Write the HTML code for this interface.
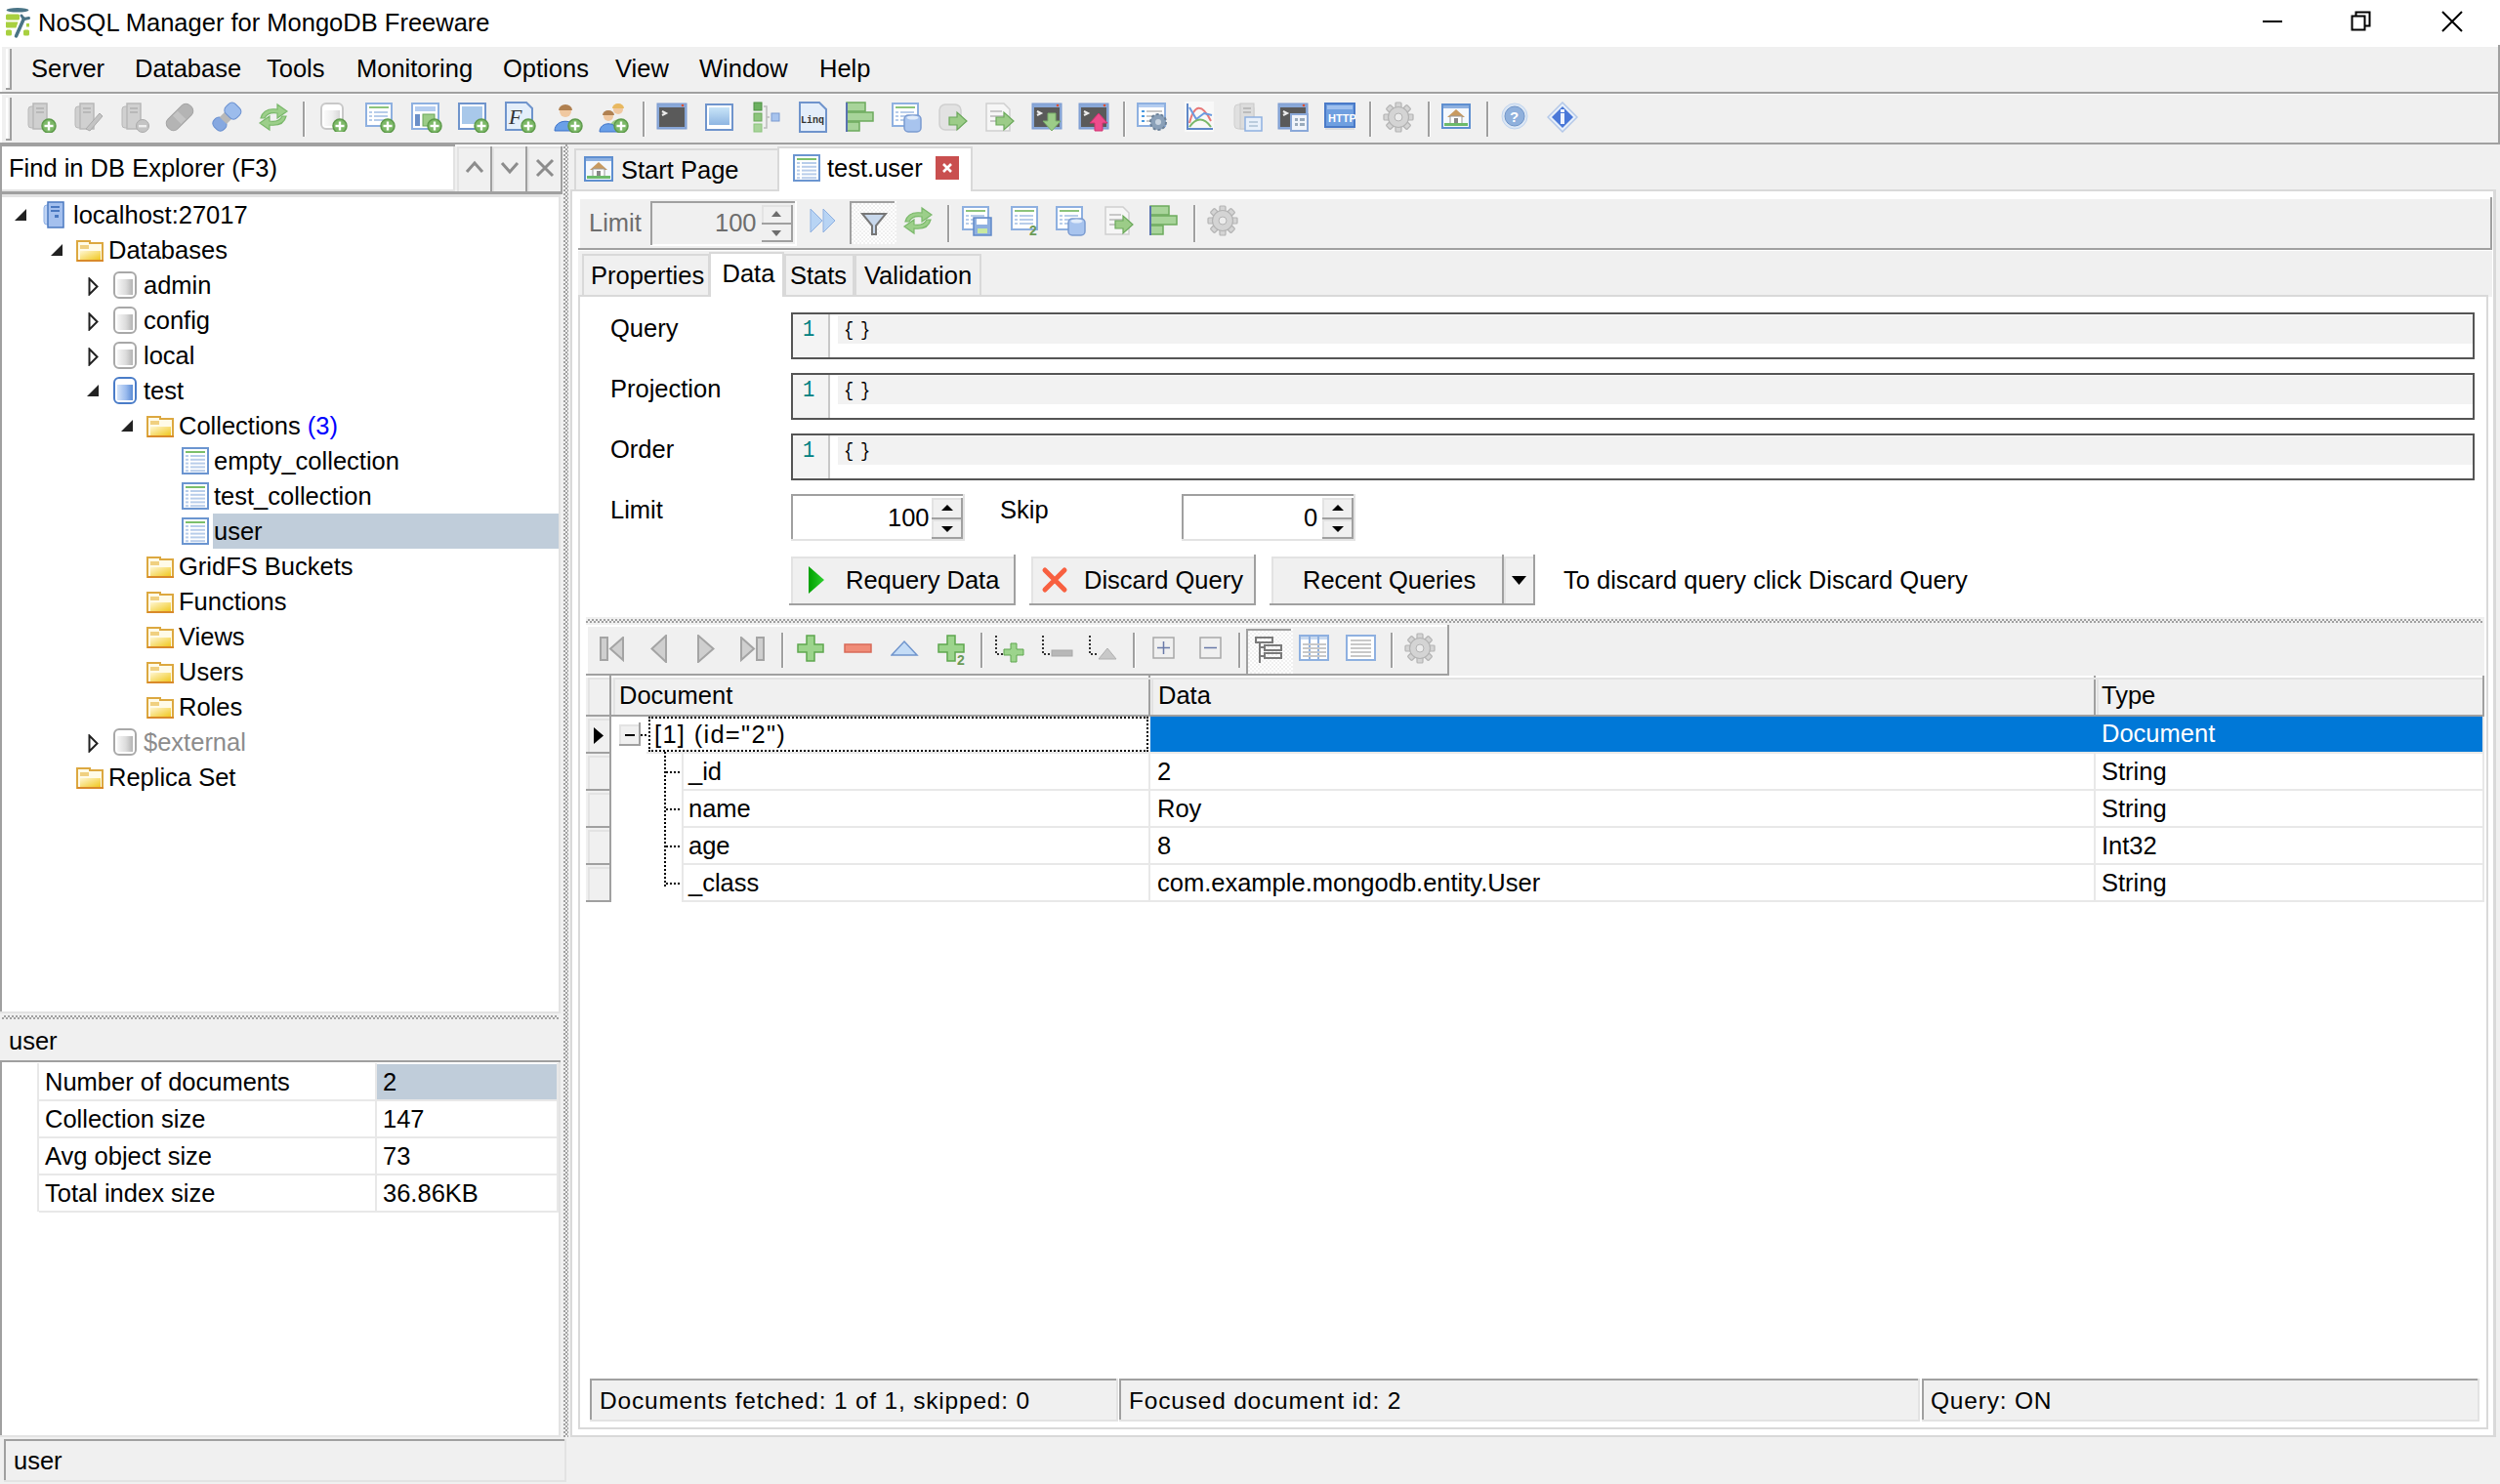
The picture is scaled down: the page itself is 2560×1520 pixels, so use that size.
<!DOCTYPE html>
<html><head><meta charset="utf-8"><style>
html,body{margin:0;padding:0;}
body{width:2560px;height:1520px;position:relative;overflow:hidden;background:#f0f0f0;font-family:'Liberation Sans', sans-serif;}
body>div,body>svg{position:absolute;}
.t{white-space:nowrap;line-height:1;}
</style></head><body>
<div style="left:0px;top:0px;width:2560px;height:48px;background:#fff;"></div>
<svg style="left:0px;top:0px" width="40" height="48" viewBox="0 0 40 48"><ellipse cx="18" cy="10.3" rx="11.5" ry="2.3" fill="#4a7486"/><rect x="6" y="14.5" width="14" height="6" rx="1.5" fill="#a8d040"/><path d="M6 22.5 H18.5 L16.5 28.5 H7 Q6 28.5 6 27.5 Z" fill="#a8d040"/><rect x="6" y="30.5" width="6" height="6" rx="1.5" fill="#a8d040"/><rect x="24" y="30.5" width="6" height="6" rx="1.5" fill="#a8d040"/><rect x="27" y="24" width="3" height="3.5" fill="#a8d040"/><path d="M16.5 37 L24.5 19" stroke="#4a7486" stroke-width="3.5" stroke-linecap="round"/><path d="M22 16 L24.5 19.5 L29.5 18.5" stroke="#4a7486" stroke-width="3" fill="none" stroke-linecap="round"/></svg>
<div class="t" style="left:39.0px;top:11.4px;font-size:25.5px;color:#000;font-family:'Liberation Sans', sans-serif;">NoSQL Manager for MongoDB Freeware</div>
<div style="left:2317px;top:21px;width:20px;height:2px;background:#000;"></div>
<svg style="left:2406px;top:10px" width="24" height="24" viewBox="0 0 24 24"><rect x="2.5" y="6.5" width="13" height="14" fill="none" stroke="#000" stroke-width="2"/><path d="M6.5 6.5 V2.5 H20.5 V16.5 H15.5" fill="none" stroke="#000" stroke-width="2"/></svg>
<svg style="left:2499px;top:10px" width="24" height="24" viewBox="0 0 24 24"><path d="M2 2 L22 22 M22 2 L2 22" stroke="#000" stroke-width="2"/></svg>
<div style="left:0px;top:48px;width:2560px;height:100px;background:#f0f0f0;"></div>
<div style="left:2px;top:48px;width:2556px;height:46px;background:#f0f0f0;"></div>
<div style="left:6px;top:50px;width:2px;height:42px;background:#fff;"></div>
<div style="left:10px;top:50px;width:2px;height:42px;background:#a0a0a0;"></div>
<div style="left:6px;top:90px;width:6px;height:2px;background:#a0a0a0;"></div>
<div class="t" style="left:32.0px;top:58.4px;font-size:25.5px;color:#000;font-family:'Liberation Sans', sans-serif;">Server</div>
<div class="t" style="left:138.0px;top:58.4px;font-size:25.5px;color:#000;font-family:'Liberation Sans', sans-serif;">Database</div>
<div class="t" style="left:273.0px;top:58.4px;font-size:25.5px;color:#000;font-family:'Liberation Sans', sans-serif;">Tools</div>
<div class="t" style="left:365.0px;top:58.4px;font-size:25.5px;color:#000;font-family:'Liberation Sans', sans-serif;">Monitoring</div>
<div class="t" style="left:515.0px;top:58.4px;font-size:25.5px;color:#000;font-family:'Liberation Sans', sans-serif;">Options</div>
<div class="t" style="left:630.0px;top:58.4px;font-size:25.5px;color:#000;font-family:'Liberation Sans', sans-serif;">View</div>
<div class="t" style="left:716.0px;top:58.4px;font-size:25.5px;color:#000;font-family:'Liberation Sans', sans-serif;">Window</div>
<div class="t" style="left:839.0px;top:58.4px;font-size:25.5px;color:#000;font-family:'Liberation Sans', sans-serif;">Help</div>
<div style="left:0px;top:94px;width:2558px;height:2px;background:#a0a0a0;"></div>
<div style="left:0px;top:96px;width:2558px;height:1px;background:#fff;"></div>
<div style="left:2558px;top:46px;width:2px;height:102px;background:#a0a0a0;"></div>
<div style="left:0px;top:48px;width:2px;height:46px;background:#fff;"></div>
<div style="left:0px;top:97px;width:2px;height:49px;background:#fff;"></div>
<div style="left:6px;top:100px;width:2px;height:44px;background:#fff;"></div>
<div style="left:10px;top:100px;width:2px;height:44px;background:#a0a0a0;"></div>
<div style="left:6px;top:142px;width:6px;height:2px;background:#a0a0a0;"></div>
<div style="left:0px;top:146px;width:2560px;height:2px;background:#a0a0a0;"></div>
<svg style="left:26px;top:104px" width="32" height="32" viewBox="0 0 32 32"><rect x="3" y="5" width="8" height="22" rx="3" fill="#d0d0d0" stroke="#b8b8b8"/><rect x="8" y="2" width="14" height="26" fill="#d0d0d0" stroke="#b8b8b8" stroke-width="1.5"/><rect x="11" y="6" width="8" height="2" fill="#b8b8b8"/><rect x="11" y="10" width="8" height="2" fill="#b8b8b8"/><circle cx="24" cy="25" r="7" fill="#7cb867" stroke="#5d9a4a" stroke-width="1.5"/><rect x="19.5" y="23.8" width="9" height="2.4" fill="#fff"/><rect x="22.8" y="20.5" width="2.4" height="9" fill="#fff"/></svg>
<svg style="left:74px;top:104px" width="32" height="32" viewBox="0 0 32 32"><rect x="3" y="5" width="8" height="22" rx="3" fill="#d0d0d0" stroke="#b8b8b8"/><rect x="8" y="2" width="14" height="26" fill="#d0d0d0" stroke="#b8b8b8" stroke-width="1.5"/><rect x="11" y="6" width="8" height="2" fill="#b8b8b8"/><rect x="11" y="10" width="8" height="2" fill="#b8b8b8"/><path d="M14 28 L28 12 L31 15 L18 30 Z" fill="#c4c4c4" stroke="#aaa"/></svg>
<svg style="left:122px;top:104px" width="32" height="32" viewBox="0 0 32 32"><rect x="3" y="5" width="8" height="22" rx="3" fill="#d0d0d0" stroke="#b8b8b8"/><rect x="8" y="2" width="14" height="26" fill="#d0d0d0" stroke="#b8b8b8" stroke-width="1.5"/><rect x="11" y="6" width="8" height="2" fill="#b8b8b8"/><rect x="11" y="10" width="8" height="2" fill="#b8b8b8"/><circle cx="24" cy="25" r="6.5" fill="#c4c4c4" stroke="#aaa"/><rect x="20" y="24" width="8" height="2.4" fill="#eee"/></svg>
<svg style="left:168px;top:104px" width="32" height="32" viewBox="0 0 32 32"><g transform="rotate(-45 16 16)"><rect x="0" y="9" width="32" height="14" rx="6" fill="#b4b4b4" stroke="#a4a4a4"/><rect x="12" y="10" width="7" height="12" fill="#c4c4c4"/></g></svg>
<svg style="left:216px;top:104px" width="32" height="32" viewBox="0 0 32 32"><g transform="rotate(-45 16 16)"><rect x="0" y="9" width="12" height="14" rx="5" fill="#86a8e0" stroke="#6a90d0"/><rect x="11" y="11" width="8" height="10" fill="#b8b8b8"/><rect x="18" y="8" width="14" height="16" rx="5" fill="#9cbcec" stroke="#6a90d0"/></g></svg>
<svg style="left:264px;top:104px" width="32" height="32" viewBox="0 0 32 32"><path d="M3 17 C5 9 12 7 20 8 L20 3 L30 10 L20 17 L20 12 C14 11 9 13 7 17 Z" fill="#9ccf8a" stroke="#7ab86a" stroke-width="1.2"/><path d="M29 15 C27 23 20 25 12 24 L12 29 L2 22 L12 15 L12 20 C18 21 23 19 25 15 Z" fill="#9ccf8a" stroke="#7ab86a" stroke-width="1.2"/></svg>
<div style="left:310px;top:104px;width:2px;height:36px;background:#a0a0a0;"></div>
<div style="left:312px;top:104px;width:1px;height:36px;background:#fff;"></div>
<svg style="left:328px;top:105px" width="30" height="30" viewBox="0 0 30 30"><defs><linearGradient id="dbglight" x1="0" y1="0" x2="1" y2="0"><stop offset="0" stop-color="#fafafa"/><stop offset="0.55" stop-color="#eeeeee"/><stop offset="1" stop-color="#d8d8d8"/></linearGradient></defs><rect x="1" y="1" width="22" height="26" rx="5" fill="#fff" stroke="#c8c8c8" stroke-width="2"/><rect x="4" y="8" width="16" height="16" fill="url(#dbglight)"/><circle cx="20" cy="24" r="7" fill="#7cb867" stroke="#5d9a4a" stroke-width="1.5"/><rect x="15.5" y="22.8" width="9" height="2.4" fill="#fff"/><rect x="18.8" y="19.5" width="2.4" height="9" fill="#fff"/></svg>
<svg style="left:373px;top:104px" width="32" height="32" viewBox="0 0 32 32"><rect x="2" y="2" width="26" height="23" fill="#fff" stroke="#8eb0e0" stroke-width="2"/><rect x="5" y="5" width="20" height="2" fill="#8cc47c"/><rect x="5" y="10" width="3" height="2" fill="#b8cdea"/><rect x="10" y="10" width="14" height="2" fill="#b8cdea"/><rect x="5" y="14" width="3" height="2" fill="#b8cdea"/><rect x="10" y="14" width="14" height="2" fill="#b8cdea"/><rect x="5" y="18" width="3" height="2" fill="#b8cdea"/><rect x="10" y="18" width="14" height="2" fill="#b8cdea"/><circle cx="24" cy="25" r="7" fill="#7cb867" stroke="#5d9a4a" stroke-width="1.5"/><rect x="19.5" y="23.8" width="9" height="2.4" fill="#fff"/><rect x="22.8" y="20.5" width="2.4" height="9" fill="#fff"/></svg>
<svg style="left:421px;top:104px" width="32" height="32" viewBox="0 0 32 32"><rect x="1" y="2" width="27" height="26" fill="#fff" stroke="#8eb0e0" stroke-width="2"/><rect x="4" y="5" width="21" height="5" fill="#b4cdf0"/><rect x="4" y="13" width="5" height="12" fill="#6b8fc8"/><rect x="12" y="13" width="12" height="12" fill="#9ccc88" stroke="#6aa85a"/><circle cx="24" cy="25" r="7" fill="#7cb867" stroke="#5d9a4a" stroke-width="1.5"/><rect x="19.5" y="23.8" width="9" height="2.4" fill="#fff"/><rect x="22.8" y="20.5" width="2.4" height="9" fill="#fff"/></svg>
<svg style="left:469px;top:104px" width="32" height="32" viewBox="0 0 32 32"><rect x="1" y="2" width="27" height="26" fill="#fff" stroke="#6f94cc" stroke-width="2"/><rect x="4" y="5" width="21" height="18" fill="#a8c8ea"/><circle cx="24" cy="25" r="7" fill="#7cb867" stroke="#5d9a4a" stroke-width="1.5"/><rect x="19.5" y="23.8" width="9" height="2.4" fill="#fff"/><rect x="22.8" y="20.5" width="2.4" height="9" fill="#fff"/></svg>
<svg style="left:517px;top:104px" width="32" height="32" viewBox="0 0 32 32"><path d="M1 1 H22 L28 7 V29 H1 Z" fill="#e4eefa" stroke="#6f94cc" stroke-width="2"/><text x="4" y="23" font-family="Liberation Serif" font-style="italic" font-size="22" fill="#333">F</text><circle cx="24" cy="25" r="7" fill="#7cb867" stroke="#5d9a4a" stroke-width="1.5"/><rect x="19.5" y="23.8" width="9" height="2.4" fill="#fff"/><rect x="22.8" y="20.5" width="2.4" height="9" fill="#fff"/></svg>
<svg style="left:565px;top:104px" width="32" height="32" viewBox="0 0 32 32"><circle cx="14" cy="10" r="6" fill="#f0c8a0"/><path d="M14 3 a7 6 0 0 1 7 6 H7 a7 6 0 0 1 7 -6" fill="#b08050"/><path d="M3 30 C3 17 25 17 25 30 Z" fill="#6aa0e8" stroke="#3a70c8"/><circle cx="24" cy="25" r="7" fill="#7cb867" stroke="#5d9a4a" stroke-width="1.5"/><rect x="19.5" y="23.8" width="9" height="2.4" fill="#fff"/><rect x="22.8" y="20.5" width="2.4" height="9" fill="#fff"/></svg>
<svg style="left:612px;top:104px" width="32" height="32" viewBox="0 0 32 32"><circle cx="21" cy="8" r="5" fill="#f0c8a0"/><path d="M21 2 a6 5 0 0 1 6 5 H15 a6 5 0 0 1 6 -5" fill="#e8b860"/><path d="M13 26 C13 16 29 16 29 26 Z" fill="#9ccc88"/><circle cx="11" cy="15" r="5" fill="#f0c8a0"/><path d="M11 9 a6 5 0 0 1 6 5 H5 a6 5 0 0 1 6 -5" fill="#b08050"/><path d="M2 31 C2 20 20 20 20 31 Z" fill="#6aa0e8" stroke="#3a70c8"/><circle cx="24" cy="25" r="7" fill="#7cb867" stroke="#5d9a4a" stroke-width="1.5"/><rect x="19.5" y="23.8" width="9" height="2.4" fill="#fff"/><rect x="22.8" y="20.5" width="2.4" height="9" fill="#fff"/></svg>
<div style="left:658px;top:104px;width:2px;height:36px;background:#a0a0a0;"></div>
<div style="left:660px;top:104px;width:1px;height:36px;background:#fff;"></div>
<svg style="left:672px;top:104px" width="32" height="32" viewBox="0 0 32 32"><rect x="1" y="2" width="30" height="26" fill="#8aa8d8" stroke="#7a9ad0"/><rect x="3" y="6" width="26" height="20" fill="#5a5a5a"/><circle cx="27" cy="4" r="1.3" fill="#e05030"/><path d="M6 10 L10 12 L6 14" stroke="#eee" stroke-width="2" fill="none"/></svg>
<svg style="left:722px;top:105px" width="30" height="30" viewBox="0 0 30 30"><rect x="1" y="2" width="27" height="26" fill="#fff" stroke="#6f94cc" stroke-width="2"/><defs><linearGradient id="wg" x1="0" y1="0" x2="0" y2="1"><stop offset="0" stop-color="#c8e4f8"/><stop offset="1" stop-color="#8fb6e2"/></linearGradient></defs><rect x="4" y="5" width="21" height="18" fill="url(#wg)"/></svg>
<svg style="left:771px;top:104px" width="30" height="32" viewBox="0 0 30 32"><rect x="1" y="1" width="8" height="8" fill="#6cb060" stroke="#4a9040"/><rect x="1" y="12" width="8" height="8" fill="#8cc47c" stroke="#6aa85a"/><rect x="1" y="23" width="8" height="8" fill="#a8d49a" stroke="#8cc47c"/><path d="M11 5 H14 V27 H11 M14 16 H17" stroke="#bbb" stroke-width="1.5" fill="none"/><rect x="19" y="12" width="8" height="8" fill="#a8c4ee" stroke="#7a9ad0"/></svg>
<svg style="left:818px;top:104px" width="30" height="32" viewBox="0 0 30 32"><path d="M1 1 H21 L28 8 V31 H1 Z" fill="#e4eefa" stroke="#6f94cc" stroke-width="2"/><text x="2" y="22" font-family="Liberation Mono" font-weight="bold" font-size="10" fill="#333">Linq</text></svg>
<svg style="left:866px;top:104px" width="30" height="32" viewBox="0 0 30 32"><rect x="1" y="1" width="19" height="9" fill="#a8d49a" stroke="#6caa5c" stroke-width="1.5"/><rect x="1" y="11" width="27" height="9" fill="#a8d49a" stroke="#6caa5c" stroke-width="1.5"/><rect x="1" y="21" width="13" height="9" fill="#a8d49a" stroke="#6caa5c" stroke-width="1.5"/><rect x="0" y="1" width="2" height="30" fill="#5a72b0"/></svg>
<svg style="left:912px;top:104px" width="32" height="32" viewBox="0 0 32 32"><rect x="2" y="2" width="26" height="23" fill="#fff" stroke="#8eb0e0" stroke-width="2"/><rect x="5" y="5" width="20" height="2" fill="#8cc47c"/><rect x="5" y="10" width="3" height="2" fill="#b8cdea"/><rect x="10" y="10" width="14" height="2" fill="#b8cdea"/><rect x="5" y="14" width="3" height="2" fill="#b8cdea"/><rect x="10" y="14" width="14" height="2" fill="#b8cdea"/><rect x="5" y="18" width="3" height="2" fill="#b8cdea"/><rect x="10" y="18" width="14" height="2" fill="#b8cdea"/><rect x="14" y="14" width="17" height="17" rx="4" fill="#a8c4ee" stroke="#7a9ad0" stroke-width="1.5"/><ellipse cx="22.5" cy="16.5" rx="6" ry="2" fill="#e0ebfa"/></svg>
<svg style="left:960px;top:104px" width="32" height="32" viewBox="0 0 32 32"><rect x="2" y="3" width="22" height="26" rx="6" fill="#e2e2e2" stroke="#cfcfcf" stroke-width="1.5"/><path d="M12 16 H20 V11 L30 20 L20 29 V24 H12 Z" fill="#9ccc88" stroke="#6aa85a" stroke-width="1.2"/></svg>
<svg style="left:1008px;top:104px" width="32" height="32" viewBox="0 0 32 32"><path d="M2 2 H20 L26 8 V30 H2 Z" fill="#f6f6f6" stroke="#d0d0d0" stroke-width="1.5"/><rect x="6" y="9" width="12" height="2" fill="#c8c8c8"/><rect x="6" y="14" width="14" height="2" fill="#c8c8c8"/><rect x="6" y="19" width="10" height="2" fill="#c8c8c8"/><path d="M12 16 H20 V11 L30 20 L20 29 V24 H12 Z" fill="#9ccc88" stroke="#6aa85a" stroke-width="1.2"/></svg>
<svg style="left:1056px;top:104px" width="32" height="32" viewBox="0 0 32 32"><rect x="1" y="2" width="30" height="26" fill="#8aa8d8" stroke="#7a9ad0"/><rect x="3" y="6" width="26" height="20" fill="#5a5a5a"/><circle cx="27" cy="4" r="1.3" fill="#e05030"/><path d="M6 10 L10 12 L6 14" stroke="#eee" stroke-width="2" fill="none"/><path d="M17 12 H25 V20 H30 L21 30 L12 20 H17 Z" fill="#9ccc88" stroke="#7ab06a"/></svg>
<svg style="left:1104px;top:104px" width="32" height="32" viewBox="0 0 32 32"><rect x="1" y="2" width="30" height="26" fill="#8aa8d8" stroke="#7a9ad0"/><rect x="3" y="6" width="26" height="20" fill="#5a5a5a"/><circle cx="27" cy="4" r="1.3" fill="#e05030"/><path d="M6 10 L10 12 L6 14" stroke="#eee" stroke-width="2" fill="none"/><path d="M21 12 L30 22 H25 V30 H17 V22 H12 Z" fill="#ee4c8c" stroke="#d03070"/></svg>
<div style="left:1150px;top:104px;width:2px;height:36px;background:#a0a0a0;"></div>
<div style="left:1152px;top:104px;width:1px;height:36px;background:#fff;"></div>
<svg style="left:1164px;top:104px" width="32" height="32" viewBox="0 0 32 32"><rect x="1" y="2" width="28" height="23" fill="#fff" stroke="#8eb0e0" stroke-width="2"/><rect x="2" y="3" width="26" height="3" fill="#b4cdf0"/><rect x="5" y="9" width="3" height="2" fill="#4a9ae0"/><rect x="10" y="9" width="16" height="2" fill="#c8c8c8"/><rect x="5" y="14" width="3" height="2" fill="#4a9ae0"/><rect x="10" y="14" width="10" height="2" fill="#c8c8c8"/><rect x="5" y="19" width="3" height="2" fill="#4a9ae0"/><rect x="10" y="19" width="8" height="2" fill="#c8c8c8"/><circle cx="22" cy="21" r="8" fill="#8aa0b8" stroke="#6a8098" stroke-width="2" stroke-dasharray="3 2"/><circle cx="22" cy="21" r="3" fill="#c8d4e0"/></svg>
<svg style="left:1213px;top:104px" width="30" height="32" viewBox="0 0 30 32"><rect x="0" y="0" width="30" height="31" fill="#f8f8f8"/><path d="M3 2 V28 H29" stroke="#5f88c8" stroke-width="2" fill="none"/><path d="M5 22 C10 2 18 2 27 20" stroke="#e87878" stroke-width="2" fill="none"/><path d="M5 6 L12 18 L20 12 L28 14" stroke="#6a9ae0" stroke-width="2" fill="none"/><path d="M5 26 C12 16 20 16 27 26" stroke="#7ab86a" stroke-width="2" fill="none"/></svg>
<svg style="left:1262px;top:104px" width="32" height="32" viewBox="0 0 32 32"><rect x="2" y="3" width="20" height="25" rx="4" fill="#e0e0e0" stroke="#cfcfcf"/><rect x="8" y="2" width="14" height="26" fill="#dcdcdc" stroke="#c8c8c8"/><rect x="11" y="6" width="8" height="2" fill="#bbb"/><rect x="11" y="10" width="8" height="2" fill="#bbb"/><rect x="13" y="16" width="17" height="14" fill="#e8f0fa" stroke="#8eb0e0" stroke-width="1.5"/><rect x="17" y="20" width="9" height="2" fill="#bcd"/><rect x="17" y="24" width="9" height="2" fill="#bcd"/></svg>
<svg style="left:1308px;top:104px" width="32" height="32" viewBox="0 0 32 32"><rect x="1" y="2" width="30" height="26" fill="#8aa8d8" stroke="#7a9ad0"/><rect x="3" y="6" width="26" height="20" fill="#5a5a5a"/><circle cx="27" cy="4" r="1.3" fill="#e05030"/><path d="M6 10 L10 12 L6 14" stroke="#eee" stroke-width="2" fill="none"/><rect x="14" y="13" width="17" height="17" fill="#f0f4fa" stroke="#8aa8d8" stroke-width="2"/><rect x="18" y="17" width="3" height="3" fill="#9ab"/><rect x="23" y="17" width="5" height="3" fill="#9ab"/><rect x="18" y="22" width="3" height="3" fill="#9ab"/><rect x="23" y="22" width="5" height="3" fill="#9ab"/></svg>
<svg style="left:1356px;top:105px" width="32" height="30" viewBox="0 0 32 30"><rect x="1" y="1" width="30" height="24" fill="#6f9fe0" stroke="#4a7ac8" stroke-width="2"/><rect x="3" y="3" width="26" height="4" fill="#9fc0ee"/><text x="4" y="20" font-family="Liberation Sans" font-weight="bold" font-size="11" fill="#fff">HTTP</text><rect x="1" y="26" width="30" height="2" fill="#ddd"/></svg>
<div style="left:1402px;top:104px;width:2px;height:36px;background:#a0a0a0;"></div>
<div style="left:1404px;top:104px;width:1px;height:36px;background:#fff;"></div>
<svg style="left:1416px;top:104px" width="32" height="32" viewBox="0 0 32 32"><rect x="13" y="1" width="6" height="8" rx="1" fill="#d4d4d4" stroke="#b4b4b4" stroke-width="1.2" transform="rotate(0 16 16)"/><rect x="13" y="1" width="6" height="8" rx="1" fill="#d4d4d4" stroke="#b4b4b4" stroke-width="1.2" transform="rotate(45 16 16)"/><rect x="13" y="1" width="6" height="8" rx="1" fill="#d4d4d4" stroke="#b4b4b4" stroke-width="1.2" transform="rotate(90 16 16)"/><rect x="13" y="1" width="6" height="8" rx="1" fill="#d4d4d4" stroke="#b4b4b4" stroke-width="1.2" transform="rotate(135 16 16)"/><rect x="13" y="1" width="6" height="8" rx="1" fill="#d4d4d4" stroke="#b4b4b4" stroke-width="1.2" transform="rotate(180 16 16)"/><rect x="13" y="1" width="6" height="8" rx="1" fill="#d4d4d4" stroke="#b4b4b4" stroke-width="1.2" transform="rotate(225 16 16)"/><rect x="13" y="1" width="6" height="8" rx="1" fill="#d4d4d4" stroke="#b4b4b4" stroke-width="1.2" transform="rotate(270 16 16)"/><rect x="13" y="1" width="6" height="8" rx="1" fill="#d4d4d4" stroke="#b4b4b4" stroke-width="1.2" transform="rotate(315 16 16)"/><circle cx="16" cy="16" r="10.5" fill="#d4d4d4" stroke="#b4b4b4" stroke-width="1.2"/><circle cx="16" cy="16" r="4" fill="#ececec" stroke="#b4b4b4"/></svg>
<div style="left:1462px;top:104px;width:2px;height:36px;background:#a0a0a0;"></div>
<div style="left:1464px;top:104px;width:1px;height:36px;background:#fff;"></div>
<svg style="left:1476px;top:106px" width="30" height="26" viewBox="0 0 30 26"><rect x="1" y="1" width="28" height="24" fill="#f4f8fd" stroke="#5f8fd0" stroke-width="2"/><rect x="2" y="2" width="26" height="3" fill="#8db0e0"/><path d="M6 14 L15 6 L24 14 Z" fill="#c89a60"/><rect x="9" y="13" width="12" height="8" fill="#fff" stroke="#999"/><rect x="13" y="15" width="4" height="6" fill="#888"/><rect x="3" y="20" width="24" height="3" fill="#6cba6a"/></svg>
<div style="left:1522px;top:104px;width:2px;height:36px;background:#a0a0a0;"></div>
<div style="left:1524px;top:104px;width:1px;height:36px;background:#fff;"></div>
<svg style="left:1537px;top:105px" width="30" height="30" viewBox="0 0 30 30"><circle cx="14" cy="14" r="13" fill="#dbe6f4" stroke="#c0d4ee"/><circle cx="14" cy="14" r="10" fill="#8fb0dc" stroke="#6f94c8"/><text x="9" y="20" font-family="Liberation Sans" font-weight="bold" font-size="15" fill="#fff">?</text></svg>
<svg style="left:1584px;top:104px" width="32" height="32" viewBox="0 0 32 32"><path d="M16 1 L31 16 L16 31 L1 16 Z" fill="#e8f0fa" stroke="#b4c8e8" stroke-width="1.5"/><path d="M16 5 L27 16 L16 27 L5 16 Z" fill="#4a78d8"/><rect x="14" y="12" width="4" height="11" fill="#f0f4ff"/><rect x="14" y="8" width="4" height="3" fill="#f0f4ff"/></svg>
<div style="left:0px;top:148px;width:580px;height:1372px;background:#f0f0f0;"></div>
<div style="left:0px;top:148px;width:466px;height:48px;background:#fff;"></div>
<div style="left:0px;top:148px;width:466px;height:2px;background:#a0a0a0;"></div>
<div style="left:0px;top:148px;width:2px;height:50px;background:#a0a0a0;"></div>
<div style="left:2px;top:150px;width:464px;height:2px;background:#fff;"></div>
<div style="left:464px;top:150px;width:2px;height:46px;background:#e3e3e3;"></div>
<div style="left:2px;top:194px;width:464px;height:2px;background:#e3e3e3;"></div>
<div class="t" style="left:9.0px;top:159.9px;font-size:25.5px;color:#000;font-family:'Liberation Sans', sans-serif;">Find in DB Explorer (F3)</div>
<div style="left:466px;top:148px;width:36px;height:2px;background:#fff;"></div>
<div style="left:468px;top:150px;width:34px;height:46px;background:#f0f0f0;"></div>
<div style="left:468px;top:150px;width:34px;height:2px;background:#e3e3e3;"></div>
<div style="left:468px;top:150px;width:2px;height:46px;background:#e3e3e3;"></div>
<div style="left:502px;top:150px;width:2px;height:46px;background:#a0a0a0;"></div>
<div style="left:502px;top:148px;width:36px;height:2px;background:#fff;"></div>
<div style="left:504px;top:150px;width:34px;height:46px;background:#f0f0f0;"></div>
<div style="left:504px;top:150px;width:34px;height:2px;background:#e3e3e3;"></div>
<div style="left:504px;top:150px;width:2px;height:46px;background:#e3e3e3;"></div>
<div style="left:538px;top:150px;width:2px;height:46px;background:#a0a0a0;"></div>
<div style="left:538px;top:148px;width:36px;height:2px;background:#fff;"></div>
<div style="left:540px;top:150px;width:34px;height:46px;background:#f0f0f0;"></div>
<div style="left:540px;top:150px;width:34px;height:2px;background:#e3e3e3;"></div>
<div style="left:540px;top:150px;width:2px;height:46px;background:#e3e3e3;"></div>
<div style="left:574px;top:150px;width:2px;height:46px;background:#a0a0a0;"></div>
<svg style="left:476px;top:164px" width="20" height="15" viewBox="0 0 20 15"><path d="M2 12 L10 3 L18 12" stroke="#8c8c8c" stroke-width="3" fill="none"/></svg>
<svg style="left:512px;top:164px" width="20" height="15" viewBox="0 0 20 15"><path d="M2 3 L10 12 L18 3" stroke="#8c8c8c" stroke-width="3" fill="none"/></svg>
<svg style="left:548px;top:162px" width="20" height="20" viewBox="0 0 20 20"><path d="M2 2 L18 18 M18 2 L2 18" stroke="#8c8c8c" stroke-width="3"/></svg>
<div style="left:0px;top:196px;width:576px;height:3px;background:#a0a0a0;"></div>
<div style="left:0px;top:199px;width:574px;height:839px;background:#fff;"></div>
<div style="left:0px;top:199px;width:2px;height:839px;background:#a0a0a0;"></div>
<div style="left:2px;top:199px;width:570px;height:3px;background:#e3e3e3;"></div>
<div style="left:572px;top:199px;width:2px;height:839px;background:#e3e3e3;"></div>
<div style="left:0px;top:1036px;width:574px;height:2px;background:#e3e3e3;"></div>
<svg style="left:15px;top:214px" width="12" height="12" viewBox="0 0 12 12"><path d="M12 0 V12 H0 Z" fill="#222"/></svg>
<svg style="left:44px;top:206px" width="22" height="28" viewBox="0 0 22 28"><rect x="1" y="4" width="10" height="20" rx="3" fill="#c0d4f4" stroke="#8fb0e4"/><rect x="5" y="1" width="16" height="26" fill="#a4c0ee" stroke="#4a78c0" stroke-width="1.5"/><rect x="8" y="5" width="9" height="2" fill="#4a78c0"/><rect x="8" y="9" width="9" height="2" fill="#4a78c0"/><rect x="12" y="14" width="4" height="3" fill="#4a78c0"/></svg>
<div class="t" style="left:75.0px;top:208.4px;font-size:25.5px;color:#000;font-family:'Liberation Sans', sans-serif;">localhost:27017</div>
<svg style="left:52px;top:250px" width="12" height="12" viewBox="0 0 12 12"><path d="M12 0 V12 H0 Z" fill="#222"/></svg>
<svg style="left:78px;top:246px" width="28" height="22" viewBox="0 0 28 22"><defs><linearGradient id="fg" x1="0" y1="0" x2="1" y2="1"><stop offset="0" stop-color="#fff6d0"/><stop offset="1" stop-color="#f0c820"/></linearGradient></defs><path d="M1 1 H14 V3 H27 V21 H1 Z" fill="#fffbe8" stroke="#dca840" stroke-width="2"/><rect x="4" y="5" width="9" height="4" fill="#f0d080"/><rect x="4" y="11" width="21" height="9" fill="url(#fg)"/><rect x="1" y="20" width="27" height="2" fill="#d98a2a"/></svg>
<div class="t" style="left:111.0px;top:244.4px;font-size:25.5px;color:#000;font-family:'Liberation Sans', sans-serif;">Databases</div>
<svg style="left:90px;top:284px" width="11" height="19" viewBox="0 0 11 19"><path d="M1.5 1.5 L9.5 9.5 L1.5 17.5 Z" fill="#fff" stroke="#222" stroke-width="2"/></svg>
<svg style="left:116px;top:278px" width="24" height="28" viewBox="0 0 24 28"><defs><linearGradient id="dbggray" x1="0" y1="0" x2="1" y2="0"><stop offset="0" stop-color="#f6f6f6"/><stop offset="0.55" stop-color="#dcdcdc"/><stop offset="1" stop-color="#b4b4b4"/></linearGradient></defs><rect x="1" y="1" width="22" height="26" rx="5" fill="#fff" stroke="#a8a8a8" stroke-width="2"/><rect x="4" y="8" width="16" height="16" fill="url(#dbggray)"/></svg>
<div class="t" style="left:147.0px;top:280.4px;font-size:25.5px;color:#000;font-family:'Liberation Sans', sans-serif;">admin</div>
<svg style="left:90px;top:320px" width="11" height="19" viewBox="0 0 11 19"><path d="M1.5 1.5 L9.5 9.5 L1.5 17.5 Z" fill="#fff" stroke="#222" stroke-width="2"/></svg>
<svg style="left:116px;top:314px" width="24" height="28" viewBox="0 0 24 28"><defs><linearGradient id="dbggray" x1="0" y1="0" x2="1" y2="0"><stop offset="0" stop-color="#f6f6f6"/><stop offset="0.55" stop-color="#dcdcdc"/><stop offset="1" stop-color="#b4b4b4"/></linearGradient></defs><rect x="1" y="1" width="22" height="26" rx="5" fill="#fff" stroke="#a8a8a8" stroke-width="2"/><rect x="4" y="8" width="16" height="16" fill="url(#dbggray)"/></svg>
<div class="t" style="left:147.0px;top:316.4px;font-size:25.5px;color:#000;font-family:'Liberation Sans', sans-serif;">config</div>
<svg style="left:90px;top:356px" width="11" height="19" viewBox="0 0 11 19"><path d="M1.5 1.5 L9.5 9.5 L1.5 17.5 Z" fill="#fff" stroke="#222" stroke-width="2"/></svg>
<svg style="left:116px;top:350px" width="24" height="28" viewBox="0 0 24 28"><defs><linearGradient id="dbggray" x1="0" y1="0" x2="1" y2="0"><stop offset="0" stop-color="#f6f6f6"/><stop offset="0.55" stop-color="#dcdcdc"/><stop offset="1" stop-color="#b4b4b4"/></linearGradient></defs><rect x="1" y="1" width="22" height="26" rx="5" fill="#fff" stroke="#a8a8a8" stroke-width="2"/><rect x="4" y="8" width="16" height="16" fill="url(#dbggray)"/></svg>
<div class="t" style="left:147.0px;top:352.4px;font-size:25.5px;color:#000;font-family:'Liberation Sans', sans-serif;">local</div>
<svg style="left:89px;top:394px" width="12" height="12" viewBox="0 0 12 12"><path d="M12 0 V12 H0 Z" fill="#222"/></svg>
<svg style="left:116px;top:386px" width="24" height="28" viewBox="0 0 24 28"><defs><linearGradient id="dbgblue" x1="0" y1="0" x2="1" y2="0"><stop offset="0" stop-color="#d4e4fa"/><stop offset="0.55" stop-color="#9cbcee"/><stop offset="1" stop-color="#5c8cd4"/></linearGradient></defs><rect x="1" y="1" width="22" height="26" rx="5" fill="#fff" stroke="#4a7cc8" stroke-width="2"/><rect x="4" y="8" width="16" height="16" fill="url(#dbgblue)"/></svg>
<div class="t" style="left:147.0px;top:388.4px;font-size:25.5px;color:#000;font-family:'Liberation Sans', sans-serif;">test</div>
<svg style="left:124px;top:430px" width="12" height="12" viewBox="0 0 12 12"><path d="M12 0 V12 H0 Z" fill="#222"/></svg>
<svg style="left:150px;top:426px" width="28" height="22" viewBox="0 0 28 22"><defs><linearGradient id="fg" x1="0" y1="0" x2="1" y2="1"><stop offset="0" stop-color="#fff6d0"/><stop offset="1" stop-color="#f0c820"/></linearGradient></defs><path d="M1 1 H14 V3 H27 V21 H1 Z" fill="#fffbe8" stroke="#dca840" stroke-width="2"/><rect x="4" y="5" width="9" height="4" fill="#f0d080"/><rect x="4" y="11" width="21" height="9" fill="url(#fg)"/><rect x="1" y="20" width="27" height="2" fill="#d98a2a"/></svg>
<div class="t" style="left:183.0px;top:424.4px;font-size:25.5px;color:#000;font-family:'Liberation Sans', sans-serif;">Collections <span style="color:#0000ff">(3)</span></div>
<svg style="left:186px;top:458px" width="28" height="28" viewBox="0 0 28 28"><rect x="1" y="1" width="26" height="26" fill="#fff" stroke="#6b95d0" stroke-width="2"/><rect x="4" y="4" width="20" height="2" fill="#7cbf6a"/><rect x="4" y="8.0" width="3" height="2" fill="#b8cdea"/><rect x="9" y="8.0" width="15" height="2" fill="#b8cdea"/><rect x="4" y="11.8" width="3" height="2" fill="#b8cdea"/><rect x="9" y="11.8" width="15" height="2" fill="#b8cdea"/><rect x="4" y="15.6" width="3" height="2" fill="#b8cdea"/><rect x="9" y="15.6" width="15" height="2" fill="#b8cdea"/><rect x="4" y="19.4" width="3" height="2" fill="#b8cdea"/><rect x="9" y="19.4" width="15" height="2" fill="#b8cdea"/><rect x="4" y="23.2" width="3" height="2" fill="#b8cdea"/><rect x="9" y="23.2" width="15" height="2" fill="#b8cdea"/></svg>
<div class="t" style="left:219.0px;top:460.4px;font-size:25.5px;color:#000;font-family:'Liberation Sans', sans-serif;">empty_collection</div>
<svg style="left:186px;top:494px" width="28" height="28" viewBox="0 0 28 28"><rect x="1" y="1" width="26" height="26" fill="#fff" stroke="#6b95d0" stroke-width="2"/><rect x="4" y="4" width="20" height="2" fill="#7cbf6a"/><rect x="4" y="8.0" width="3" height="2" fill="#b8cdea"/><rect x="9" y="8.0" width="15" height="2" fill="#b8cdea"/><rect x="4" y="11.8" width="3" height="2" fill="#b8cdea"/><rect x="9" y="11.8" width="15" height="2" fill="#b8cdea"/><rect x="4" y="15.6" width="3" height="2" fill="#b8cdea"/><rect x="9" y="15.6" width="15" height="2" fill="#b8cdea"/><rect x="4" y="19.4" width="3" height="2" fill="#b8cdea"/><rect x="9" y="19.4" width="15" height="2" fill="#b8cdea"/><rect x="4" y="23.2" width="3" height="2" fill="#b8cdea"/><rect x="9" y="23.2" width="15" height="2" fill="#b8cdea"/></svg>
<div class="t" style="left:219.0px;top:496.4px;font-size:25.5px;color:#000;font-family:'Liberation Sans', sans-serif;">test_collection</div>
<div style="left:218px;top:526px;width:354px;height:36px;background:#c0cdda;"></div>
<svg style="left:186px;top:530px" width="28" height="28" viewBox="0 0 28 28"><rect x="1" y="1" width="26" height="26" fill="#fff" stroke="#6b95d0" stroke-width="2"/><rect x="4" y="4" width="20" height="2" fill="#7cbf6a"/><rect x="4" y="8.0" width="3" height="2" fill="#b8cdea"/><rect x="9" y="8.0" width="15" height="2" fill="#b8cdea"/><rect x="4" y="11.8" width="3" height="2" fill="#b8cdea"/><rect x="9" y="11.8" width="15" height="2" fill="#b8cdea"/><rect x="4" y="15.6" width="3" height="2" fill="#b8cdea"/><rect x="9" y="15.6" width="15" height="2" fill="#b8cdea"/><rect x="4" y="19.4" width="3" height="2" fill="#b8cdea"/><rect x="9" y="19.4" width="15" height="2" fill="#b8cdea"/><rect x="4" y="23.2" width="3" height="2" fill="#b8cdea"/><rect x="9" y="23.2" width="15" height="2" fill="#b8cdea"/></svg>
<div class="t" style="left:219.0px;top:532.4px;font-size:25.5px;color:#000;font-family:'Liberation Sans', sans-serif;">user</div>
<svg style="left:150px;top:570px" width="28" height="22" viewBox="0 0 28 22"><defs><linearGradient id="fg" x1="0" y1="0" x2="1" y2="1"><stop offset="0" stop-color="#fff6d0"/><stop offset="1" stop-color="#f0c820"/></linearGradient></defs><path d="M1 1 H14 V3 H27 V21 H1 Z" fill="#fffbe8" stroke="#dca840" stroke-width="2"/><rect x="4" y="5" width="9" height="4" fill="#f0d080"/><rect x="4" y="11" width="21" height="9" fill="url(#fg)"/><rect x="1" y="20" width="27" height="2" fill="#d98a2a"/></svg>
<div class="t" style="left:183.0px;top:568.4px;font-size:25.5px;color:#000;font-family:'Liberation Sans', sans-serif;">GridFS Buckets</div>
<svg style="left:150px;top:606px" width="28" height="22" viewBox="0 0 28 22"><defs><linearGradient id="fg" x1="0" y1="0" x2="1" y2="1"><stop offset="0" stop-color="#fff6d0"/><stop offset="1" stop-color="#f0c820"/></linearGradient></defs><path d="M1 1 H14 V3 H27 V21 H1 Z" fill="#fffbe8" stroke="#dca840" stroke-width="2"/><rect x="4" y="5" width="9" height="4" fill="#f0d080"/><rect x="4" y="11" width="21" height="9" fill="url(#fg)"/><rect x="1" y="20" width="27" height="2" fill="#d98a2a"/></svg>
<div class="t" style="left:183.0px;top:604.4px;font-size:25.5px;color:#000;font-family:'Liberation Sans', sans-serif;">Functions</div>
<svg style="left:150px;top:642px" width="28" height="22" viewBox="0 0 28 22"><defs><linearGradient id="fg" x1="0" y1="0" x2="1" y2="1"><stop offset="0" stop-color="#fff6d0"/><stop offset="1" stop-color="#f0c820"/></linearGradient></defs><path d="M1 1 H14 V3 H27 V21 H1 Z" fill="#fffbe8" stroke="#dca840" stroke-width="2"/><rect x="4" y="5" width="9" height="4" fill="#f0d080"/><rect x="4" y="11" width="21" height="9" fill="url(#fg)"/><rect x="1" y="20" width="27" height="2" fill="#d98a2a"/></svg>
<div class="t" style="left:183.0px;top:640.4px;font-size:25.5px;color:#000;font-family:'Liberation Sans', sans-serif;">Views</div>
<svg style="left:150px;top:678px" width="28" height="22" viewBox="0 0 28 22"><defs><linearGradient id="fg" x1="0" y1="0" x2="1" y2="1"><stop offset="0" stop-color="#fff6d0"/><stop offset="1" stop-color="#f0c820"/></linearGradient></defs><path d="M1 1 H14 V3 H27 V21 H1 Z" fill="#fffbe8" stroke="#dca840" stroke-width="2"/><rect x="4" y="5" width="9" height="4" fill="#f0d080"/><rect x="4" y="11" width="21" height="9" fill="url(#fg)"/><rect x="1" y="20" width="27" height="2" fill="#d98a2a"/></svg>
<div class="t" style="left:183.0px;top:676.4px;font-size:25.5px;color:#000;font-family:'Liberation Sans', sans-serif;">Users</div>
<svg style="left:150px;top:714px" width="28" height="22" viewBox="0 0 28 22"><defs><linearGradient id="fg" x1="0" y1="0" x2="1" y2="1"><stop offset="0" stop-color="#fff6d0"/><stop offset="1" stop-color="#f0c820"/></linearGradient></defs><path d="M1 1 H14 V3 H27 V21 H1 Z" fill="#fffbe8" stroke="#dca840" stroke-width="2"/><rect x="4" y="5" width="9" height="4" fill="#f0d080"/><rect x="4" y="11" width="21" height="9" fill="url(#fg)"/><rect x="1" y="20" width="27" height="2" fill="#d98a2a"/></svg>
<div class="t" style="left:183.0px;top:712.4px;font-size:25.5px;color:#000;font-family:'Liberation Sans', sans-serif;">Roles</div>
<svg style="left:90px;top:752px" width="11" height="19" viewBox="0 0 11 19"><path d="M1.5 1.5 L9.5 9.5 L1.5 17.5 Z" fill="#fff" stroke="#222" stroke-width="2"/></svg>
<svg style="left:116px;top:746px" width="24" height="28" viewBox="0 0 24 28"><defs><linearGradient id="dbggray" x1="0" y1="0" x2="1" y2="0"><stop offset="0" stop-color="#f6f6f6"/><stop offset="0.55" stop-color="#dcdcdc"/><stop offset="1" stop-color="#b4b4b4"/></linearGradient></defs><rect x="1" y="1" width="22" height="26" rx="5" fill="#fff" stroke="#a8a8a8" stroke-width="2"/><rect x="4" y="8" width="16" height="16" fill="url(#dbggray)"/></svg>
<div class="t" style="left:147.0px;top:748.4px;font-size:25.5px;color:#000;font-family:'Liberation Sans', sans-serif;"><span style="color:#8c8c8c">$external</span></div>
<svg style="left:78px;top:786px" width="28" height="22" viewBox="0 0 28 22"><defs><linearGradient id="fg" x1="0" y1="0" x2="1" y2="1"><stop offset="0" stop-color="#fff6d0"/><stop offset="1" stop-color="#f0c820"/></linearGradient></defs><path d="M1 1 H14 V3 H27 V21 H1 Z" fill="#fffbe8" stroke="#dca840" stroke-width="2"/><rect x="4" y="5" width="9" height="4" fill="#f0d080"/><rect x="4" y="11" width="21" height="9" fill="url(#fg)"/><rect x="1" y="20" width="27" height="2" fill="#d98a2a"/></svg>
<div class="t" style="left:111.0px;top:784.4px;font-size:25.5px;color:#000;font-family:'Liberation Sans', sans-serif;">Replica Set</div>
<div style="left:2px;top:1040px;width:570px;height:4px;background-image:repeating-conic-gradient(#a0a0a0 0 25%, #f0f0f0 0 50%);background-size:4px 4px;"></div>
<div class="t" style="left:9.0px;top:1054.4px;font-size:25.5px;color:#000;font-family:'Liberation Sans', sans-serif;">user</div>
<div style="left:0px;top:1086px;width:574px;height:2px;background:#a0a0a0;"></div>
<div style="left:0px;top:1088px;width:574px;height:384px;background:#fff;"></div>
<div style="left:0px;top:1088px;width:2px;height:384px;background:#a0a0a0;"></div>
<div style="left:572px;top:1088px;width:2px;height:384px;background:#e3e3e3;"></div>
<div style="left:0px;top:1470px;width:574px;height:2px;background:#e3e3e3;"></div>
<div style="left:38px;top:1089px;width:2px;height:152px;background:#e8e8e8;"></div>
<div style="left:384px;top:1089px;width:2px;height:152px;background:#e8e8e8;"></div>
<div style="left:570px;top:1089px;width:2px;height:152px;background:#e8e8e8;"></div>
<div style="left:386px;top:1090px;width:184px;height:36px;background:#c0cdda;"></div>
<div style="left:40px;top:1126px;width:532px;height:2px;background:#e8e8e8;"></div>
<div class="t" style="left:46.0px;top:1096.0px;font-size:25.5px;color:#000;font-family:'Liberation Sans', sans-serif;">Number of documents</div>
<div class="t" style="left:392.0px;top:1096.0px;font-size:25.5px;color:#000;font-family:'Liberation Sans', sans-serif;">2</div>
<div style="left:40px;top:1164px;width:532px;height:2px;background:#e8e8e8;"></div>
<div class="t" style="left:46.0px;top:1134.0px;font-size:25.5px;color:#000;font-family:'Liberation Sans', sans-serif;">Collection size</div>
<div class="t" style="left:392.0px;top:1134.0px;font-size:25.5px;color:#000;font-family:'Liberation Sans', sans-serif;">147</div>
<div style="left:40px;top:1202px;width:532px;height:2px;background:#e8e8e8;"></div>
<div class="t" style="left:46.0px;top:1172.0px;font-size:25.5px;color:#000;font-family:'Liberation Sans', sans-serif;">Avg object size</div>
<div class="t" style="left:392.0px;top:1172.0px;font-size:25.5px;color:#000;font-family:'Liberation Sans', sans-serif;">73</div>
<div style="left:40px;top:1240px;width:532px;height:2px;background:#e8e8e8;"></div>
<div class="t" style="left:46.0px;top:1210.0px;font-size:25.5px;color:#000;font-family:'Liberation Sans', sans-serif;">Total index size</div>
<div class="t" style="left:392.0px;top:1210.0px;font-size:25.5px;color:#000;font-family:'Liberation Sans', sans-serif;">36.86KB</div>
<div style="left:4px;top:1474px;width:576px;height:44px;background:#f0f0f0;"></div>
<div style="left:4px;top:1474px;width:576px;height:2px;background:#a0a0a0;"></div>
<div style="left:4px;top:1474px;width:2px;height:44px;background:#a0a0a0;"></div>
<div style="left:4px;top:1516px;width:576px;height:2px;background:#e3e3e3;"></div>
<div style="left:578px;top:1474px;width:2px;height:44px;background:#e3e3e3;"></div>
<div class="t" style="left:14.0px;top:1484.4px;font-size:25.5px;color:#000;font-family:'Liberation Sans', sans-serif;">user</div>
<div style="left:580px;top:148px;width:1980px;height:1372px;background:#f0f0f0;"></div>
<div style="left:577px;top:148px;width:5px;height:1324px;background-image:repeating-conic-gradient(#a0a0a0 0 25%, #f0f0f0 0 50%);background-size:4px 4px;"></div>
<div style="left:588px;top:152px;width:209px;height:44px;background:#f0f0f0;"></div>
<div style="left:588px;top:152px;width:209px;height:2px;background:#d9d9d9;"></div>
<div style="left:588px;top:152px;width:2px;height:44px;background:#d9d9d9;"></div>
<svg style="left:598px;top:160px" width="30" height="26" viewBox="0 0 30 26"><rect x="1" y="1" width="28" height="24" fill="#f4f8fd" stroke="#5f8fd0" stroke-width="2"/><rect x="2" y="2" width="26" height="3" fill="#8db0e0"/><path d="M6 14 L15 6 L24 14 Z" fill="#c89a60"/><rect x="9" y="13" width="12" height="8" fill="#fff" stroke="#999"/><rect x="13" y="15" width="4" height="6" fill="#888"/><rect x="3" y="20" width="24" height="3" fill="#6cba6a"/></svg>
<div class="t" style="left:636.0px;top:161.9px;font-size:25.5px;color:#000;font-family:'Liberation Sans', sans-serif;">Start Page</div>
<div style="left:584px;top:194px;width:1972px;height:1278px;background:#d9d9d9;"></div>
<div style="left:586px;top:196px;width:1967px;height:1274px;background:#fff;"></div>
<div style="left:796px;top:150px;width:200px;height:46px;background:#d9d9d9;"></div>
<div style="left:798px;top:152px;width:196px;height:46px;background:#fff;"></div>
<svg style="left:812px;top:158px" width="28" height="28" viewBox="0 0 28 28"><rect x="1" y="1" width="26" height="26" fill="#fff" stroke="#6b95d0" stroke-width="2"/><rect x="4" y="4" width="20" height="2" fill="#7cbf6a"/><rect x="4" y="8.0" width="3" height="2" fill="#b8cdea"/><rect x="9" y="8.0" width="15" height="2" fill="#b8cdea"/><rect x="4" y="11.8" width="3" height="2" fill="#b8cdea"/><rect x="9" y="11.8" width="15" height="2" fill="#b8cdea"/><rect x="4" y="15.6" width="3" height="2" fill="#b8cdea"/><rect x="9" y="15.6" width="15" height="2" fill="#b8cdea"/><rect x="4" y="19.4" width="3" height="2" fill="#b8cdea"/><rect x="9" y="19.4" width="15" height="2" fill="#b8cdea"/><rect x="4" y="23.2" width="3" height="2" fill="#b8cdea"/><rect x="9" y="23.2" width="15" height="2" fill="#b8cdea"/></svg>
<div class="t" style="left:847.0px;top:160.0px;font-size:25.5px;color:#000;font-family:'Liberation Sans', sans-serif;">test.user</div>
<svg style="left:958px;top:160px" width="24" height="24" viewBox="0 0 24 24"><rect width="24" height="24" fill="#c94f4f"/><path d="M8 8 L16 16 M16 8 L8 16" stroke="#fff" stroke-width="2.6"/></svg>
<div style="left:594px;top:204px;width:1958px;height:52px;background:#f0f0f0;"></div>
<div style="left:592px;top:254px;width:1960px;height:2px;background:#a0a0a0;"></div>
<div style="left:2550px;top:202px;width:2px;height:54px;background:#a0a0a0;"></div>
<div class="t" style="left:603.0px;top:216.4px;font-size:25.5px;color:#6d6d6d;font-family:'Liberation Sans', sans-serif;">Limit</div>
<div style="left:666px;top:206px;width:150px;height:46px;background:#fff;"></div>
<div style="left:666px;top:206px;width:148px;height:2px;background:#a0a0a0;"></div>
<div style="left:666px;top:206px;width:2px;height:45px;background:#a0a0a0;"></div>
<div style="left:668px;top:208px;width:146px;height:42px;background:#f0f0f0;"></div>
<div class="t" style="left:732.0px;top:215.7px;font-size:25.5px;color:#6d6d6d;font-family:'Liberation Sans', sans-serif;">100</div>
<div style="left:780px;top:210px;width:32px;height:20px;background:#f0f0f0;box-shadow: inset 2px 2px 0 #e3e3e3;"></div>
<div style="left:780px;top:228px;width:32px;height:2px;background:#a0a0a0;"></div>
<div style="left:810px;top:210px;width:2px;height:38px;background:#a0a0a0;"></div>
<div style="left:780px;top:246px;width:32px;height:2px;background:#a0a0a0;"></div>
<svg style="left:788px;top:214px" width="14" height="10" viewBox="0 0 14 10"><path d="M2 8 L7 2 L12 8 Z" fill="#6d6d6d"/></svg>
<svg style="left:788px;top:234px" width="14" height="10" viewBox="0 0 14 10"><path d="M2 2 L7 8 L12 2 Z" fill="#6d6d6d"/></svg>
<svg style="left:829px;top:213px" width="30" height="26" viewBox="0 0 30 26"><path d="M1 1 L13 13 L1 25 Z" fill="#b8d4f4" stroke="#8fb0e0"/><path d="M14 1 L26 13 L14 25 Z" fill="#b8d4f4" stroke="#8fb0e0"/></svg>
<div style="left:870px;top:206px;width:48px;height:44px;background-image:repeating-conic-gradient(#fff 0 25%, #f0f0f0 0 50%);background-size:4px 4px;"></div>
<div style="left:870px;top:206px;width:46px;height:2px;background:#a0a0a0;"></div>
<div style="left:870px;top:206px;width:2px;height:44px;background:#a0a0a0;"></div>
<svg style="left:880px;top:216px" width="30" height="26" viewBox="0 0 30 26"><path d="M3 3 H27 L17 15 V24 H13 V15 Z" fill="#c8d8ec" stroke="#777" stroke-width="2"/></svg>
<svg style="left:924px;top:210px" width="32" height="32" viewBox="0 0 32 32"><path d="M3 17 C5 9 12 7 20 8 L20 3 L30 10 L20 17 L20 12 C14 11 9 13 7 17 Z" fill="#9ccf8a" stroke="#7ab86a" stroke-width="1.2"/><path d="M29 15 C27 23 20 25 12 24 L12 29 L2 22 L12 15 L12 20 C18 21 23 19 25 15 Z" fill="#9ccf8a" stroke="#7ab86a" stroke-width="1.2"/></svg>
<div style="left:970px;top:210px;width:2px;height:38px;background:#a0a0a0;"></div>
<div style="left:972px;top:210px;width:1px;height:38px;background:#fff;"></div>
<svg style="left:984px;top:210px" width="32" height="32" viewBox="0 0 32 32"><rect x="2" y="2" width="26" height="23" fill="#fff" stroke="#8eb0e0" stroke-width="2"/><rect x="5" y="5" width="20" height="2" fill="#8cc47c"/><rect x="5" y="10" width="3" height="2" fill="#b8cdea"/><rect x="10" y="10" width="14" height="2" fill="#b8cdea"/><rect x="5" y="14" width="3" height="2" fill="#b8cdea"/><rect x="10" y="14" width="14" height="2" fill="#b8cdea"/><rect x="5" y="18" width="3" height="2" fill="#b8cdea"/><rect x="10" y="18" width="14" height="2" fill="#b8cdea"/><rect x="13" y="13" width="18" height="18" fill="#8fb0e0" stroke="#5f88c8" stroke-width="1.5"/><rect x="16" y="14" width="11" height="6" fill="#fff"/><rect x="17" y="24" width="10" height="5" fill="#c8e8a0"/></svg>
<svg style="left:1034px;top:210px" width="32" height="32" viewBox="0 0 32 32"><rect x="2" y="2" width="26" height="23" fill="#fff" stroke="#8eb0e0" stroke-width="2"/><rect x="5" y="5" width="20" height="2" fill="#8cc47c"/><rect x="5" y="10" width="3" height="2" fill="#b8cdea"/><rect x="10" y="10" width="14" height="2" fill="#b8cdea"/><rect x="5" y="14" width="3" height="2" fill="#b8cdea"/><rect x="10" y="14" width="14" height="2" fill="#b8cdea"/><rect x="5" y="18" width="3" height="2" fill="#b8cdea"/><rect x="10" y="18" width="14" height="2" fill="#b8cdea"/><text x="20" y="31" font-family="Liberation Sans" font-weight="bold" font-size="14" fill="#6a9a56">2</text></svg>
<svg style="left:1080px;top:210px" width="32" height="32" viewBox="0 0 32 32"><rect x="2" y="2" width="26" height="23" fill="#fff" stroke="#8eb0e0" stroke-width="2"/><rect x="5" y="5" width="20" height="2" fill="#8cc47c"/><rect x="5" y="10" width="3" height="2" fill="#b8cdea"/><rect x="10" y="10" width="14" height="2" fill="#b8cdea"/><rect x="5" y="14" width="3" height="2" fill="#b8cdea"/><rect x="10" y="14" width="14" height="2" fill="#b8cdea"/><rect x="5" y="18" width="3" height="2" fill="#b8cdea"/><rect x="10" y="18" width="14" height="2" fill="#b8cdea"/><rect x="14" y="14" width="17" height="17" rx="4" fill="#a8c4ee" stroke="#7a9ad0" stroke-width="1.5"/><ellipse cx="22.5" cy="16.5" rx="6" ry="2" fill="#e0ebfa"/></svg>
<svg style="left:1130px;top:210px" width="32" height="32" viewBox="0 0 32 32"><path d="M2 2 H20 L26 8 V30 H2 Z" fill="#f6f6f6" stroke="#d0d0d0" stroke-width="1.5"/><rect x="6" y="9" width="12" height="2" fill="#c8c8c8"/><rect x="6" y="14" width="14" height="2" fill="#c8c8c8"/><rect x="6" y="19" width="10" height="2" fill="#c8c8c8"/><path d="M12 16 H20 V11 L30 20 L20 29 V24 H12 Z" fill="#9ccc88" stroke="#6aa85a" stroke-width="1.2"/></svg>
<svg style="left:1177px;top:210px" width="30" height="32" viewBox="0 0 30 32"><rect x="1" y="1" width="19" height="9" fill="#a8d49a" stroke="#6caa5c" stroke-width="1.5"/><rect x="1" y="11" width="27" height="9" fill="#a8d49a" stroke="#6caa5c" stroke-width="1.5"/><rect x="1" y="21" width="13" height="9" fill="#a8d49a" stroke="#6caa5c" stroke-width="1.5"/><rect x="0" y="1" width="2" height="30" fill="#5a72b0"/></svg>
<div style="left:1222px;top:210px;width:2px;height:38px;background:#a0a0a0;"></div>
<div style="left:1224px;top:210px;width:1px;height:38px;background:#fff;"></div>
<svg style="left:1236px;top:210px" width="32" height="32" viewBox="0 0 32 32"><rect x="13" y="1" width="6" height="8" rx="1" fill="#d4d4d4" stroke="#b4b4b4" stroke-width="1.2" transform="rotate(0 16 16)"/><rect x="13" y="1" width="6" height="8" rx="1" fill="#d4d4d4" stroke="#b4b4b4" stroke-width="1.2" transform="rotate(45 16 16)"/><rect x="13" y="1" width="6" height="8" rx="1" fill="#d4d4d4" stroke="#b4b4b4" stroke-width="1.2" transform="rotate(90 16 16)"/><rect x="13" y="1" width="6" height="8" rx="1" fill="#d4d4d4" stroke="#b4b4b4" stroke-width="1.2" transform="rotate(135 16 16)"/><rect x="13" y="1" width="6" height="8" rx="1" fill="#d4d4d4" stroke="#b4b4b4" stroke-width="1.2" transform="rotate(180 16 16)"/><rect x="13" y="1" width="6" height="8" rx="1" fill="#d4d4d4" stroke="#b4b4b4" stroke-width="1.2" transform="rotate(225 16 16)"/><rect x="13" y="1" width="6" height="8" rx="1" fill="#d4d4d4" stroke="#b4b4b4" stroke-width="1.2" transform="rotate(270 16 16)"/><rect x="13" y="1" width="6" height="8" rx="1" fill="#d4d4d4" stroke="#b4b4b4" stroke-width="1.2" transform="rotate(315 16 16)"/><circle cx="16" cy="16" r="10.5" fill="#d4d4d4" stroke="#b4b4b4" stroke-width="1.2"/><circle cx="16" cy="16" r="4" fill="#ececec" stroke="#b4b4b4"/></svg>
<div style="left:592px;top:256px;width:1960px;height:48px;background:#f0f0f0;"></div>
<div style="left:592px;top:256px;width:1960px;height:1px;background:#fff;"></div>
<div style="left:596px;top:260px;width:131px;height:44px;background:#f0f0f0;"></div>
<div style="left:596px;top:260px;width:131px;height:2px;background:#d9d9d9;"></div>
<div style="left:596px;top:260px;width:2px;height:44px;background:#d9d9d9;"></div>
<div style="left:725px;top:260px;width:2px;height:44px;background:#d9d9d9;"></div>
<div class="t" style="left:605.0px;top:270.1px;font-size:25.5px;color:#000;font-family:'Liberation Sans', sans-serif;">Properties</div>
<div style="left:803px;top:260px;width:72px;height:44px;background:#f0f0f0;"></div>
<div style="left:803px;top:260px;width:72px;height:2px;background:#d9d9d9;"></div>
<div style="left:803px;top:260px;width:2px;height:44px;background:#d9d9d9;"></div>
<div style="left:873px;top:260px;width:2px;height:44px;background:#d9d9d9;"></div>
<div class="t" style="left:809.0px;top:270.1px;font-size:25.5px;color:#000;font-family:'Liberation Sans', sans-serif;">Stats</div>
<div style="left:875px;top:260px;width:130px;height:44px;background:#f0f0f0;"></div>
<div style="left:875px;top:260px;width:130px;height:2px;background:#d9d9d9;"></div>
<div style="left:875px;top:260px;width:2px;height:44px;background:#d9d9d9;"></div>
<div style="left:1003px;top:260px;width:2px;height:44px;background:#d9d9d9;"></div>
<div class="t" style="left:885.0px;top:270.1px;font-size:25.5px;color:#000;font-family:'Liberation Sans', sans-serif;">Validation</div>
<div style="left:592px;top:302px;width:1956px;height:1162px;background:#d9d9d9;"></div>
<div style="left:594px;top:304px;width:1952px;height:1158px;background:#fff;"></div>
<div style="left:726px;top:258px;width:77px;height:46px;background:#d9d9d9;"></div>
<div style="left:728px;top:260px;width:73px;height:46px;background:#fff;"></div>
<div class="t" style="left:739.5px;top:267.6px;font-size:25.5px;color:#000;font-family:'Liberation Sans', sans-serif;">Data</div>
<div class="t" style="left:625.0px;top:323.9px;font-size:25.5px;color:#000;font-family:'Liberation Sans', sans-serif;">Query</div>
<div style="left:810px;top:320px;width:1724px;height:48px;background:#555;"></div>
<div style="left:812px;top:322px;width:1720px;height:44px;background:#fff;"></div>
<div style="left:812px;top:322px;width:36px;height:44px;background:#f4f4f4;"></div>
<div style="left:848px;top:322px;width:2px;height:44px;background:#c8c8c8;"></div>
<div style="left:858px;top:323px;width:1674px;height:29px;background:#f2f2f2;"></div>
<div class="t" style="left:822.0px;top:325.6px;font-size:24px;color:#008080;font-family:'Liberation Mono', monospace;transform:scaleX(0.85);transform-origin:left">1</div>
<div class="t" style="left:864.0px;top:329.2px;font-size:20px;color:#000;font-family:'Liberation Mono', monospace;transform:scaleX(0.85);transform-origin:left">{</div>
<div class="t" style="left:880.5px;top:329.2px;font-size:20px;color:#000;font-family:'Liberation Mono', monospace;transform:scaleX(0.85);transform-origin:left">}</div>
<div class="t" style="left:625.0px;top:386.0px;font-size:25.5px;color:#000;font-family:'Liberation Sans', sans-serif;">Projection</div>
<div style="left:810px;top:382px;width:1724px;height:48px;background:#555;"></div>
<div style="left:812px;top:384px;width:1720px;height:44px;background:#fff;"></div>
<div style="left:812px;top:384px;width:36px;height:44px;background:#f4f4f4;"></div>
<div style="left:848px;top:384px;width:2px;height:44px;background:#c8c8c8;"></div>
<div style="left:858px;top:385px;width:1674px;height:29px;background:#f2f2f2;"></div>
<div class="t" style="left:822.0px;top:387.6px;font-size:24px;color:#008080;font-family:'Liberation Mono', monospace;transform:scaleX(0.85);transform-origin:left">1</div>
<div class="t" style="left:864.0px;top:391.2px;font-size:20px;color:#000;font-family:'Liberation Mono', monospace;transform:scaleX(0.85);transform-origin:left">{</div>
<div class="t" style="left:880.5px;top:391.2px;font-size:20px;color:#000;font-family:'Liberation Mono', monospace;transform:scaleX(0.85);transform-origin:left">}</div>
<div class="t" style="left:625.0px;top:448.1px;font-size:25.5px;color:#000;font-family:'Liberation Sans', sans-serif;">Order</div>
<div style="left:810px;top:444px;width:1724px;height:48px;background:#555;"></div>
<div style="left:812px;top:446px;width:1720px;height:44px;background:#fff;"></div>
<div style="left:812px;top:446px;width:36px;height:44px;background:#f4f4f4;"></div>
<div style="left:848px;top:446px;width:2px;height:44px;background:#c8c8c8;"></div>
<div style="left:858px;top:447px;width:1674px;height:29px;background:#f2f2f2;"></div>
<div class="t" style="left:822.0px;top:449.6px;font-size:24px;color:#008080;font-family:'Liberation Mono', monospace;transform:scaleX(0.85);transform-origin:left">1</div>
<div class="t" style="left:864.0px;top:453.2px;font-size:20px;color:#000;font-family:'Liberation Mono', monospace;transform:scaleX(0.85);transform-origin:left">{</div>
<div class="t" style="left:880.5px;top:453.2px;font-size:20px;color:#000;font-family:'Liberation Mono', monospace;transform:scaleX(0.85);transform-origin:left">}</div>
<div class="t" style="left:625.0px;top:510.0px;font-size:25.5px;color:#000;font-family:'Liberation Sans', sans-serif;">Limit</div>
<div class="t" style="left:1024.0px;top:510.0px;font-size:25.5px;color:#000;font-family:'Liberation Sans', sans-serif;">Skip</div>
<div style="left:810px;top:506px;width:178px;height:48px;background:#fff;"></div>
<div style="left:810px;top:506px;width:178px;height:2px;background:#a0a0a0;"></div>
<div style="left:810px;top:506px;width:2px;height:48px;background:#a0a0a0;"></div>
<div style="left:810px;top:552px;width:178px;height:2px;background:#e3e3e3;"></div>
<div style="left:986px;top:506px;width:2px;height:48px;background:#e3e3e3;"></div>
<div class="t" style="left:909.0px;top:518.4px;font-size:25.5px;color:#000;font-family:'Liberation Sans', sans-serif;">100</div>
<div style="left:954px;top:510px;width:32px;height:42px;background:#f0f0f0;"></div>
<div style="left:954px;top:510px;width:32px;height:2px;background:#e3e3e3;"></div>
<div style="left:954px;top:510px;width:2px;height:42px;background:#e3e3e3;"></div>
<div style="left:954px;top:530px;width:32px;height:2px;background:#a0a0a0;"></div>
<div style="left:984px;top:510px;width:2px;height:42px;background:#a0a0a0;"></div>
<div style="left:954px;top:550px;width:32px;height:2px;background:#a0a0a0;"></div>
<div style="left:956px;top:532px;width:28px;height:2px;background:#e3e3e3;"></div>
<svg style="left:962px;top:515px" width="16" height="10" viewBox="0 0 16 10"><path d="M2 8 L8 2 L14 8 Z" fill="#000"/></svg>
<svg style="left:962px;top:537px" width="16" height="10" viewBox="0 0 16 10"><path d="M2 2 L8 8 L14 2 Z" fill="#000"/></svg>
<div style="left:1210px;top:506px;width:178px;height:48px;background:#fff;"></div>
<div style="left:1210px;top:506px;width:178px;height:2px;background:#a0a0a0;"></div>
<div style="left:1210px;top:506px;width:2px;height:48px;background:#a0a0a0;"></div>
<div style="left:1210px;top:552px;width:178px;height:2px;background:#e3e3e3;"></div>
<div style="left:1386px;top:506px;width:2px;height:48px;background:#e3e3e3;"></div>
<div class="t" style="left:1335.0px;top:518.4px;font-size:25.5px;color:#000;font-family:'Liberation Sans', sans-serif;">0</div>
<div style="left:1354px;top:510px;width:32px;height:42px;background:#f0f0f0;"></div>
<div style="left:1354px;top:510px;width:32px;height:2px;background:#e3e3e3;"></div>
<div style="left:1354px;top:510px;width:2px;height:42px;background:#e3e3e3;"></div>
<div style="left:1354px;top:530px;width:32px;height:2px;background:#a0a0a0;"></div>
<div style="left:1384px;top:510px;width:2px;height:42px;background:#a0a0a0;"></div>
<div style="left:1354px;top:550px;width:32px;height:2px;background:#a0a0a0;"></div>
<div style="left:1356px;top:532px;width:28px;height:2px;background:#e3e3e3;"></div>
<svg style="left:1362px;top:515px" width="16" height="10" viewBox="0 0 16 10"><path d="M2 8 L8 2 L14 8 Z" fill="#000"/></svg>
<svg style="left:1362px;top:537px" width="16" height="10" viewBox="0 0 16 10"><path d="M2 2 L8 8 L14 2 Z" fill="#000"/></svg>
<div style="left:810px;top:570px;width:230px;height:50px;background:#f0f0f0;"></div>
<div style="left:810px;top:570px;width:230px;height:2px;background:#e3e3e3;"></div>
<div style="left:810px;top:570px;width:2px;height:50px;background:#e3e3e3;"></div>
<div style="left:808px;top:618px;width:232px;height:2px;background:#a0a0a0;"></div>
<div style="left:1038px;top:568px;width:2px;height:52px;background:#a0a0a0;"></div>
<div class="t" style="left:866.0px;top:581.7px;font-size:25.5px;color:#000;font-family:'Liberation Sans', sans-serif;">Requery Data</div>
<svg style="left:828px;top:580px" width="17" height="28" viewBox="0 0 17 28"><defs><linearGradient id="pg" x1="0" y1="0" x2="1" y2="0"><stop offset="0" stop-color="#00a000"/><stop offset="1" stop-color="#30d030"/></linearGradient></defs><path d="M0 0 L16 14 L0 28 Z" fill="url(#pg)"/></svg>
<div style="left:1056px;top:570px;width:230px;height:50px;background:#f0f0f0;"></div>
<div style="left:1056px;top:570px;width:230px;height:2px;background:#e3e3e3;"></div>
<div style="left:1056px;top:570px;width:2px;height:50px;background:#e3e3e3;"></div>
<div style="left:1054px;top:618px;width:232px;height:2px;background:#a0a0a0;"></div>
<div style="left:1284px;top:568px;width:2px;height:52px;background:#a0a0a0;"></div>
<div class="t" style="left:1110.0px;top:581.7px;font-size:25.5px;color:#000;font-family:'Liberation Sans', sans-serif;">Discard Query</div>
<svg style="left:1066px;top:580px" width="28" height="28" viewBox="0 0 28 28"><path d="M4 4 L24 24 M24 4 L4 24" stroke="#f86040" stroke-width="5" stroke-linecap="round"/></svg>
<div style="left:1302px;top:570px;width:238px;height:50px;background:#f0f0f0;"></div>
<div style="left:1302px;top:570px;width:238px;height:2px;background:#e3e3e3;"></div>
<div style="left:1302px;top:570px;width:2px;height:50px;background:#e3e3e3;"></div>
<div style="left:1300px;top:618px;width:240px;height:2px;background:#a0a0a0;"></div>
<div style="left:1538px;top:568px;width:2px;height:52px;background:#a0a0a0;"></div>
<div class="t" style="left:1334.0px;top:581.7px;font-size:25.5px;color:#000;font-family:'Liberation Sans', sans-serif;">Recent Queries</div>
<div style="left:1540px;top:570px;width:32px;height:50px;background:#f0f0f0;"></div>
<div style="left:1540px;top:570px;width:32px;height:2px;background:#e3e3e3;"></div>
<div style="left:1540px;top:570px;width:2px;height:50px;background:#e3e3e3;"></div>
<div style="left:1540px;top:618px;width:32px;height:2px;background:#a0a0a0;"></div>
<div style="left:1570px;top:568px;width:2px;height:52px;background:#a0a0a0;"></div>
<svg style="left:1548px;top:590px" width="15" height="9" viewBox="0 0 15 9"><path d="M0 0 H15 L7.5 9 Z" fill="#000"/></svg>
<div class="t" style="left:1601.0px;top:582.2px;font-size:25.5px;color:#000;font-family:'Liberation Sans', sans-serif;">To discard query click Discard Query</div>
<div style="left:600px;top:632px;width:1944px;height:60px;background:#f0f0f0;"></div>
<div style="left:600px;top:634px;width:1942px;height:4px;background-image:repeating-conic-gradient(#a0a0a0 0 25%, #f0f0f0 0 50%);background-size:4px 4px;"></div>
<div style="left:600px;top:640px;width:884px;height:2px;background:#fff;"></div>
<div style="left:600px;top:640px;width:2px;height:52px;background:#fff;"></div>
<div style="left:600px;top:690px;width:884px;height:2px;background:#a0a0a0;"></div>
<div style="left:1482px;top:640px;width:2px;height:52px;background:#a0a0a0;"></div>
<svg style="left:614px;top:652px" width="26" height="26" viewBox="0 0 26 26"><rect x="1" y="1" width="7" height="23" fill="#cfcfcf" stroke="#a4a4a4" stroke-width="2"/><path d="M24 1 V24 L11 12.5 Z" fill="#cfcfcf" stroke="#a4a4a4" stroke-width="2"/></svg>
<svg style="left:666px;top:650px" width="18" height="29" viewBox="0 0 18 29"><path d="M16 1 V28 L1.5 14.5 Z" fill="#cfcfcf" stroke="#a4a4a4" stroke-width="2"/></svg>
<svg style="left:714px;top:650px" width="18" height="29" viewBox="0 0 18 29"><path d="M1 1 V28 L16.5 14.5 Z" fill="#cfcfcf" stroke="#a4a4a4" stroke-width="2"/></svg>
<svg style="left:758px;top:652px" width="26" height="26" viewBox="0 0 26 26"><path d="M1 1 V24 L14 12.5 Z" fill="#cfcfcf" stroke="#a4a4a4" stroke-width="2"/><rect x="17" y="1" width="7" height="23" fill="#cfcfcf" stroke="#a4a4a4" stroke-width="2"/></svg>
<div style="left:800px;top:648px;width:2px;height:36px;background:#a0a0a0;"></div>
<div style="left:802px;top:648px;width:1px;height:36px;background:#fff;"></div>
<svg style="left:816px;top:650px" width="30" height="30" viewBox="0 0 30 30"><path d="M10 1 H18 V10 H27 V18 H18 V27 H10 V18 H1 V10 H10 Z" fill="#9cd48c" stroke="#5ea64e" stroke-width="1.5"/></svg>
<svg style="left:864px;top:659px" width="30" height="10" viewBox="0 0 30 10"><rect x="1" y="1" width="27" height="8" fill="#f08c78" stroke="#d86a58" stroke-width="1.5"/></svg>
<svg style="left:912px;top:655px" width="30" height="18" viewBox="0 0 30 18"><path d="M1 16 L14 2 L27 16 Z" fill="#c4dcf6" stroke="#6f94cc" stroke-width="1.5"/></svg>
<svg style="left:960px;top:650px" width="32" height="32" viewBox="0 0 32 32"><path d="M10 1 H18 V10 H27 V18 H18 V27 H10 V18 H1 V10 H10 Z" fill="#9cd48c" stroke="#5ea64e" stroke-width="1.5"/><text x="20" y="31" font-family="Liberation Sans" font-weight="bold" font-size="14" fill="#6a9a56">2</text></svg>
<div style="left:1004px;top:648px;width:2px;height:36px;background:#a0a0a0;"></div>
<div style="left:1006px;top:648px;width:1px;height:36px;background:#fff;"></div>
<svg style="left:1018px;top:650px" width="34" height="32" viewBox="0 0 34 32"><path d="M2 1 V20 H9" stroke="#333" stroke-width="2" stroke-dasharray="2 2" fill="none"/><path d="M17 9 H23 V15 H30 V21 H23 V28 H17 V21 H10 V15 H17 Z" fill="#9cd48c" stroke="#5ea64e"/></svg>
<svg style="left:1066px;top:650px" width="34" height="26" viewBox="0 0 34 26"><path d="M2 1 V20 H9" stroke="#333" stroke-width="2" stroke-dasharray="2 2" fill="none"/><rect x="11" y="16" width="21" height="6" fill="#b8b8b8" stroke="#a8a8a8"/></svg>
<svg style="left:1114px;top:650px" width="34" height="28" viewBox="0 0 34 28"><path d="M2 1 V20 H9" stroke="#333" stroke-width="2" stroke-dasharray="2 2" fill="none"/><path d="M11 25 L20 14 L29 25 Z" fill="#c8c8c8" stroke="#b0b0b0"/></svg>
<div style="left:1160px;top:648px;width:2px;height:36px;background:#a0a0a0;"></div>
<div style="left:1162px;top:648px;width:1px;height:36px;background:#fff;"></div>
<svg style="left:1180px;top:652px" width="23" height="23" viewBox="0 0 23 23"><rect x="1" y="1" width="21" height="21" fill="#f0f0f0" stroke="#a8a8a8" stroke-width="1.5"/><path d="M5 11.5 H18 M11.5 5 V18" stroke="#6a7aa8" stroke-width="1.5"/></svg>
<svg style="left:1228px;top:652px" width="23" height="23" viewBox="0 0 23 23"><rect x="1" y="1" width="21" height="21" fill="#f0f0f0" stroke="#a8a8a8" stroke-width="1.5"/><path d="M5 11.5 H18" stroke="#6a7aa8" stroke-width="1.5"/></svg>
<div style="left:1268px;top:648px;width:2px;height:36px;background:#a0a0a0;"></div>
<div style="left:1270px;top:648px;width:1px;height:36px;background:#fff;"></div>
<div style="left:1276px;top:644px;width:48px;height:46px;background-image:repeating-conic-gradient(#fff 0 25%, #f0f0f0 0 50%);background-size:4px 4px;"></div>
<div style="left:1276px;top:644px;width:46px;height:2px;background:#a0a0a0;"></div>
<div style="left:1276px;top:644px;width:2px;height:46px;background:#a0a0a0;"></div>
<svg style="left:1285px;top:652px" width="30" height="28" viewBox="0 0 30 28"><rect x="1" y="1" width="17" height="5" fill="none" stroke="#7a7a7a" stroke-width="2"/><path d="M5 6 V27 M5 11 H10 M5 20 H10" stroke="#7a7a7a" stroke-width="2"/><rect x="10" y="9" width="17" height="5" fill="none" stroke="#7a7a7a" stroke-width="2"/><rect x="10" y="17" width="17" height="5" fill="none" stroke="#7a7a7a" stroke-width="2"/></svg>
<svg style="left:1330px;top:650px" width="31" height="27" viewBox="0 0 31 27"><rect x="1" y="1" width="29" height="25" fill="#fff" stroke="#8eb0e0" stroke-width="2"/><rect x="2" y="2" width="27" height="3" fill="#c8d8ee"/><path d="M11 2 V26 M20 2 V26" stroke="#8eb0e0" stroke-width="2"/><path d="M4 10 H28 M4 14 H28 M4 18 H28 M4 22 H28" stroke="#c8c8c8" stroke-width="2"/></svg>
<svg style="left:1378px;top:650px" width="31" height="27" viewBox="0 0 31 27"><rect x="1" y="1" width="29" height="25" fill="#fff" stroke="#8eb0e0" stroke-width="2"/><path d="M5 6 H26 M5 10 H26 M5 14 H26 M5 18 H26 M5 22 H26" stroke="#c8c8c8" stroke-width="2"/></svg>
<div style="left:1424px;top:648px;width:2px;height:36px;background:#a0a0a0;"></div>
<div style="left:1426px;top:648px;width:1px;height:36px;background:#fff;"></div>
<svg style="left:1438px;top:648px" width="32" height="32" viewBox="0 0 32 32"><rect x="13" y="1" width="6" height="8" rx="1" fill="#d4d4d4" stroke="#b4b4b4" stroke-width="1.2" transform="rotate(0 16 16)"/><rect x="13" y="1" width="6" height="8" rx="1" fill="#d4d4d4" stroke="#b4b4b4" stroke-width="1.2" transform="rotate(45 16 16)"/><rect x="13" y="1" width="6" height="8" rx="1" fill="#d4d4d4" stroke="#b4b4b4" stroke-width="1.2" transform="rotate(90 16 16)"/><rect x="13" y="1" width="6" height="8" rx="1" fill="#d4d4d4" stroke="#b4b4b4" stroke-width="1.2" transform="rotate(135 16 16)"/><rect x="13" y="1" width="6" height="8" rx="1" fill="#d4d4d4" stroke="#b4b4b4" stroke-width="1.2" transform="rotate(180 16 16)"/><rect x="13" y="1" width="6" height="8" rx="1" fill="#d4d4d4" stroke="#b4b4b4" stroke-width="1.2" transform="rotate(225 16 16)"/><rect x="13" y="1" width="6" height="8" rx="1" fill="#d4d4d4" stroke="#b4b4b4" stroke-width="1.2" transform="rotate(270 16 16)"/><rect x="13" y="1" width="6" height="8" rx="1" fill="#d4d4d4" stroke="#b4b4b4" stroke-width="1.2" transform="rotate(315 16 16)"/><circle cx="16" cy="16" r="10.5" fill="#d4d4d4" stroke="#b4b4b4" stroke-width="1.2"/><circle cx="16" cy="16" r="4" fill="#ececec" stroke="#b4b4b4"/></svg>
<div style="left:600px;top:692px;width:1944px;height:42px;background:#f0f0f0;"></div>
<div style="left:600px;top:692px;width:1944px;height:2px;background:#fff;"></div>
<div style="left:600px;top:732px;width:1944px;height:2px;background:#a0a0a0;"></div>
<div style="left:624px;top:692px;width:2px;height:42px;background:#a0a0a0;"></div>
<div style="left:1176px;top:692px;width:2px;height:42px;background:#a0a0a0;"></div>
<div style="left:2144px;top:692px;width:2px;height:42px;background:#a0a0a0;"></div>
<div style="left:2542px;top:692px;width:2px;height:42px;background:#a0a0a0;"></div>
<div style="left:602px;top:694px;width:2px;height:38px;background:#e3e3e3;"></div>
<div style="left:604px;top:694px;width:20px;height:2px;background:#e3e3e3;"></div>
<div style="left:628px;top:694px;width:2px;height:38px;background:#e3e3e3;"></div>
<div style="left:1179px;top:694px;width:2px;height:38px;background:#e3e3e3;"></div>
<div style="left:2147px;top:694px;width:2px;height:38px;background:#e3e3e3;"></div>
<div style="left:628px;top:694px;width:1914px;height:2px;background:#e3e3e3;"></div>
<div class="t" style="left:634.0px;top:700.0px;font-size:25.5px;color:#000;font-family:'Liberation Sans', sans-serif;">Document</div>
<div class="t" style="left:1186.0px;top:700.0px;font-size:25.5px;color:#000;font-family:'Liberation Sans', sans-serif;">Data</div>
<div class="t" style="left:2152.0px;top:700.4px;font-size:25.5px;color:#000;font-family:'Liberation Sans', sans-serif;">Type</div>
<div style="left:600px;top:734px;width:1944px;height:192px;background:#fff;"></div>
<div style="left:600px;top:734px;width:24px;height:38px;background:#f0f0f0;"></div>
<div style="left:602px;top:736px;width:2px;height:34px;background:#e3e3e3;"></div>
<div style="left:602px;top:736px;width:22px;height:2px;background:#e3e3e3;"></div>
<div style="left:600px;top:770px;width:24px;height:2px;background:#a0a0a0;"></div>
<div style="left:600px;top:772px;width:24px;height:38px;background:#f0f0f0;"></div>
<div style="left:602px;top:774px;width:2px;height:34px;background:#e3e3e3;"></div>
<div style="left:602px;top:774px;width:22px;height:2px;background:#e3e3e3;"></div>
<div style="left:600px;top:808px;width:24px;height:2px;background:#a0a0a0;"></div>
<div style="left:600px;top:810px;width:24px;height:38px;background:#f0f0f0;"></div>
<div style="left:602px;top:812px;width:2px;height:34px;background:#e3e3e3;"></div>
<div style="left:602px;top:812px;width:22px;height:2px;background:#e3e3e3;"></div>
<div style="left:600px;top:846px;width:24px;height:2px;background:#a0a0a0;"></div>
<div style="left:600px;top:848px;width:24px;height:38px;background:#f0f0f0;"></div>
<div style="left:602px;top:850px;width:2px;height:34px;background:#e3e3e3;"></div>
<div style="left:602px;top:850px;width:22px;height:2px;background:#e3e3e3;"></div>
<div style="left:600px;top:884px;width:24px;height:2px;background:#a0a0a0;"></div>
<div style="left:600px;top:886px;width:24px;height:38px;background:#f0f0f0;"></div>
<div style="left:602px;top:888px;width:2px;height:34px;background:#e3e3e3;"></div>
<div style="left:602px;top:888px;width:22px;height:2px;background:#e3e3e3;"></div>
<div style="left:600px;top:922px;width:24px;height:2px;background:#a0a0a0;"></div>
<div style="left:624px;top:734px;width:2px;height:190px;background:#a0a0a0;"></div>
<svg style="left:607px;top:744px" width="12" height="19" viewBox="0 0 12 19"><path d="M1 1 L11 9.5 L1 18 Z" fill="#000"/></svg>
<div style="left:1178px;top:734px;width:1364px;height:36px;background:#0078d7;"></div>
<div style="left:662px;top:770px;width:1882px;height:2px;background:#e8e8e8;"></div>
<div class="t" style="left:2152.0px;top:739.4px;font-size:25.5px;color:#fff;font-family:'Liberation Sans', sans-serif;">Document</div>
<div style="left:634px;top:742px;width:22px;height:22px;background:#f0f0f0;"></div>
<div style="left:634px;top:742px;width:22px;height:2px;background:#e3e3e3;"></div>
<div style="left:634px;top:742px;width:2px;height:22px;background:#e3e3e3;"></div>
<div style="left:634px;top:762px;width:22px;height:2px;background:#a0a0a0;"></div>
<div style="left:654px;top:740px;width:2px;height:24px;background:#a0a0a0;"></div>
<div style="left:640px;top:752px;width:10px;height:2px;background:#000;"></div>
<div style="left:656px;top:752px;width:8px;height:2px;background-image:repeating-linear-gradient(90deg,#000 0 2px,transparent 2px 4px)"></div>
<div style="left:664px;top:734px;width:512px;height:36px;box-sizing:border-box;border:2px dotted #000"></div>
<div class="t" style="left:670.0px;top:739.9px;font-size:25.5px;color:#000;font-family:'Liberation Sans', sans-serif;letter-spacing:1.3px">[1] (id="2")</div>
<div style="left:698px;top:808px;width:1846px;height:2px;background:#e8e8e8;"></div>
<div class="t" style="left:705.0px;top:778.1px;font-size:25.5px;color:#000;font-family:'Liberation Sans', sans-serif;">_id</div>
<div class="t" style="left:1185.0px;top:778.1px;font-size:25.5px;color:#000;font-family:'Liberation Sans', sans-serif;">2</div>
<div class="t" style="left:2152.0px;top:778.1px;font-size:25.5px;color:#000;font-family:'Liberation Sans', sans-serif;">String</div>
<div style="left:682px;top:790px;width:14px;height:2px;background-image:repeating-linear-gradient(90deg,#000 0 2px,transparent 2px 4px)"></div>
<div style="left:698px;top:846px;width:1846px;height:2px;background:#e8e8e8;"></div>
<div class="t" style="left:705.0px;top:816.1px;font-size:25.5px;color:#000;font-family:'Liberation Sans', sans-serif;">name</div>
<div class="t" style="left:1185.0px;top:816.1px;font-size:25.5px;color:#000;font-family:'Liberation Sans', sans-serif;">Roy</div>
<div class="t" style="left:2152.0px;top:816.1px;font-size:25.5px;color:#000;font-family:'Liberation Sans', sans-serif;">String</div>
<div style="left:682px;top:828px;width:14px;height:2px;background-image:repeating-linear-gradient(90deg,#000 0 2px,transparent 2px 4px)"></div>
<div style="left:698px;top:884px;width:1846px;height:2px;background:#e8e8e8;"></div>
<div class="t" style="left:705.0px;top:854.1px;font-size:25.5px;color:#000;font-family:'Liberation Sans', sans-serif;">age</div>
<div class="t" style="left:1185.0px;top:854.1px;font-size:25.5px;color:#000;font-family:'Liberation Sans', sans-serif;">8</div>
<div class="t" style="left:2152.0px;top:854.1px;font-size:25.5px;color:#000;font-family:'Liberation Sans', sans-serif;">Int32</div>
<div style="left:682px;top:866px;width:14px;height:2px;background-image:repeating-linear-gradient(90deg,#000 0 2px,transparent 2px 4px)"></div>
<div style="left:698px;top:922px;width:1846px;height:2px;background:#e8e8e8;"></div>
<div class="t" style="left:705.0px;top:892.1px;font-size:25.5px;color:#000;font-family:'Liberation Sans', sans-serif;">_class</div>
<div class="t" style="left:1185.0px;top:892.1px;font-size:25.5px;color:#000;font-family:'Liberation Sans', sans-serif;">com.example.mongodb.entity.User</div>
<div class="t" style="left:2152.0px;top:892.1px;font-size:25.5px;color:#000;font-family:'Liberation Sans', sans-serif;">String</div>
<div style="left:682px;top:904px;width:14px;height:2px;background-image:repeating-linear-gradient(90deg,#000 0 2px,transparent 2px 4px)"></div>
<div style="left:698px;top:772px;width:2px;height:152px;background:#e8e8e8;"></div>
<div style="left:1176px;top:772px;width:2px;height:152px;background:#e8e8e8;"></div>
<div style="left:2144px;top:772px;width:2px;height:152px;background:#e8e8e8;"></div>
<div style="left:2542px;top:734px;width:2px;height:190px;background:#e8e8e8;"></div>
<div style="left:680px;top:770px;width:2px;height:138px;background-image:repeating-linear-gradient(0deg,#000 0 2px,transparent 2px 4px)"></div>
<div style="left:604px;top:1412px;width:541px;height:44px;background:#f0f0f0;"></div>
<div style="left:604px;top:1412px;width:541px;height:2px;background:#a0a0a0;"></div>
<div style="left:604px;top:1412px;width:2px;height:44px;background:#a0a0a0;"></div>
<div style="left:604px;top:1454px;width:541px;height:2px;background:#e3e3e3;"></div>
<div style="left:1143px;top:1412px;width:2px;height:44px;background:#e3e3e3;"></div>
<div class="t" style="left:614.0px;top:1422.8px;font-size:24.5px;color:#000;font-family:'Liberation Sans', sans-serif;letter-spacing:0.8px">Documents fetched: 1 of 1, skipped: 0</div>
<div style="left:1146px;top:1412px;width:820px;height:44px;background:#f0f0f0;"></div>
<div style="left:1146px;top:1412px;width:820px;height:2px;background:#a0a0a0;"></div>
<div style="left:1146px;top:1412px;width:2px;height:44px;background:#a0a0a0;"></div>
<div style="left:1146px;top:1454px;width:820px;height:2px;background:#e3e3e3;"></div>
<div style="left:1964px;top:1412px;width:2px;height:44px;background:#e3e3e3;"></div>
<div class="t" style="left:1156.0px;top:1422.8px;font-size:24.5px;color:#000;font-family:'Liberation Sans', sans-serif;letter-spacing:0.8px">Focused document id: 2</div>
<div style="left:1968px;top:1412px;width:571px;height:44px;background:#f0f0f0;"></div>
<div style="left:1968px;top:1412px;width:571px;height:2px;background:#a0a0a0;"></div>
<div style="left:1968px;top:1412px;width:2px;height:44px;background:#a0a0a0;"></div>
<div style="left:1968px;top:1454px;width:571px;height:2px;background:#e3e3e3;"></div>
<div style="left:2537px;top:1412px;width:2px;height:44px;background:#e3e3e3;"></div>
<div class="t" style="left:1977.0px;top:1422.8px;font-size:24.5px;color:#000;font-family:'Liberation Sans', sans-serif;letter-spacing:0.8px">Query: ON</div>
</body></html>
